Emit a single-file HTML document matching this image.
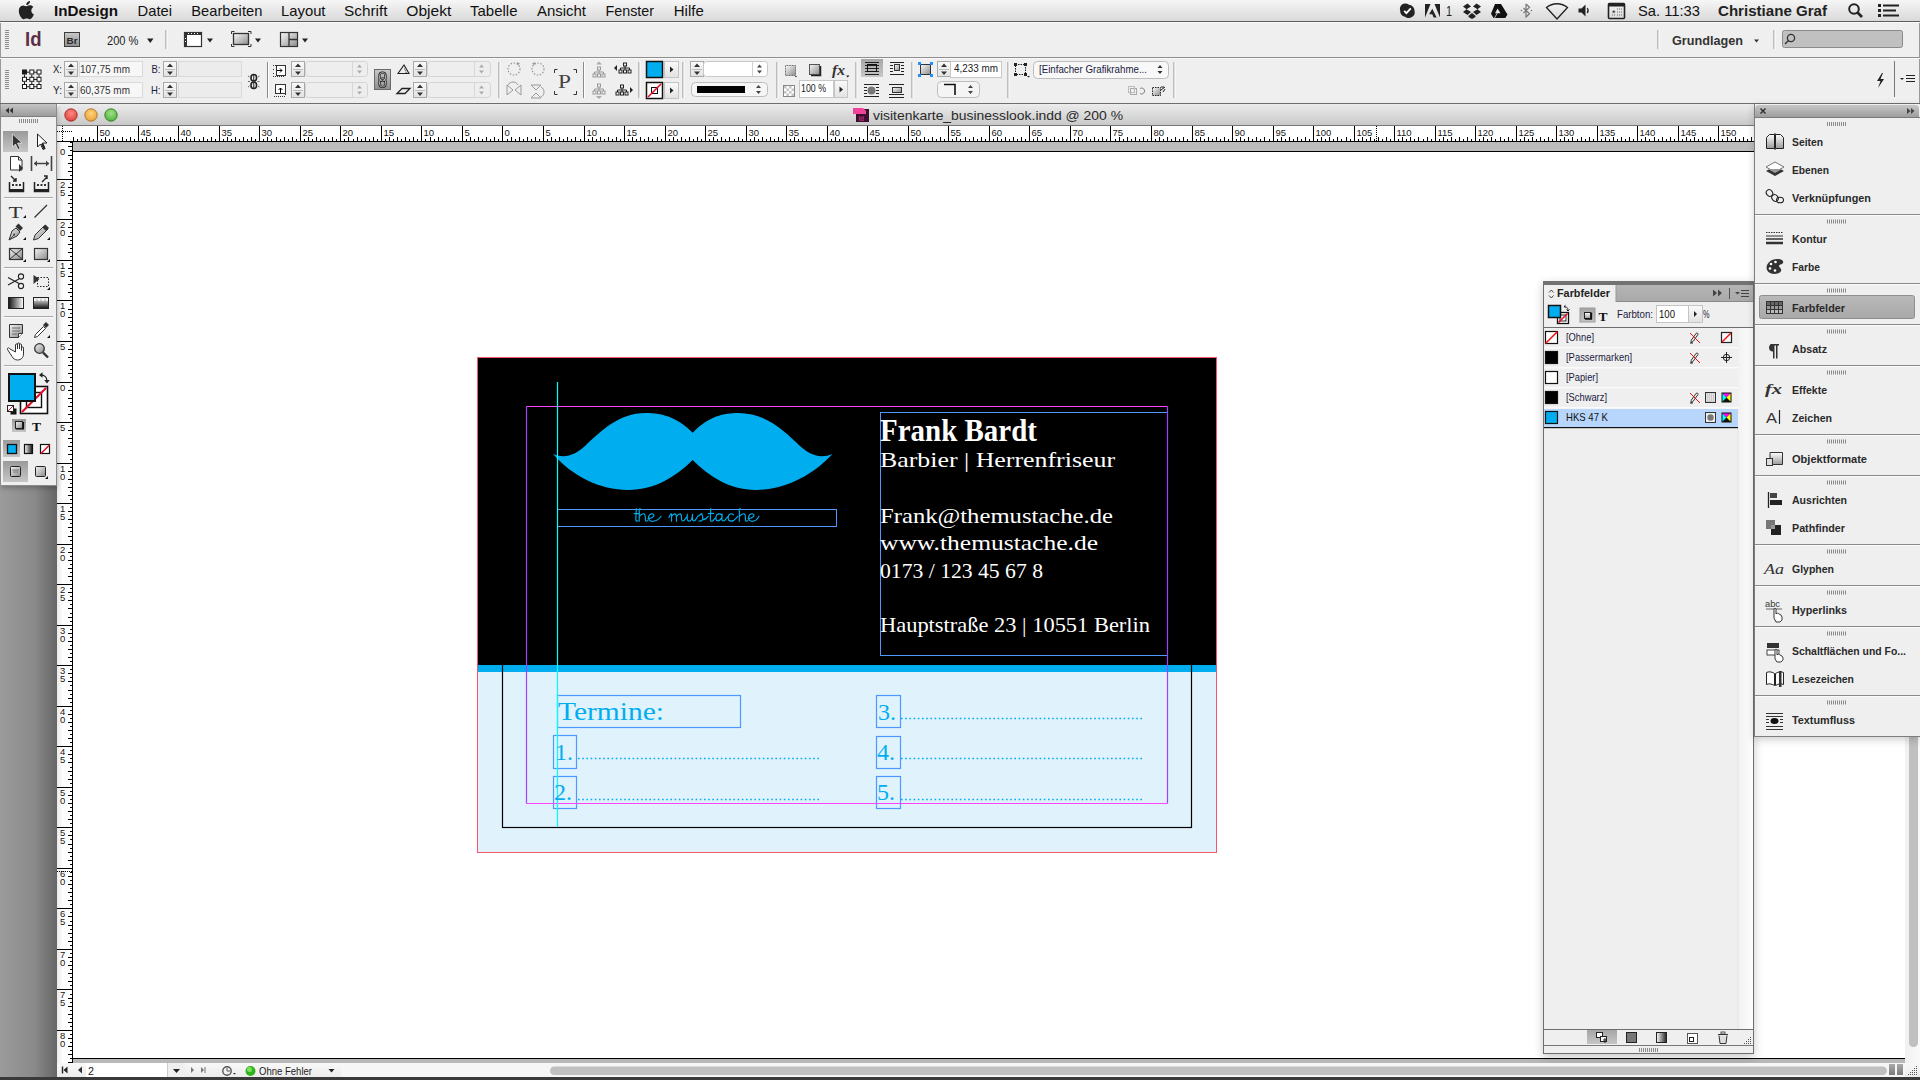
<!DOCTYPE html>
<html><head><meta charset="utf-8">
<style>
*{margin:0;padding:0;box-sizing:border-box}
html,body{width:1920px;height:1080px;overflow:hidden;background:#efefef;font-family:"Liberation Sans",sans-serif;position:relative}
.abs{position:absolute}
#menubar{left:0;top:0;width:1920px;height:22px;background:linear-gradient(#f6f6f6,#d9d9d9);border-bottom:1px solid #5c5c5c}
#menubar span{position:absolute;top:3px;font-size:14.5px;color:#111;white-space:nowrap}
#cp{left:0;top:22px;width:1920px;height:82px;background:#efefef;border-left:1px solid #9a9a9a;border-right:1px solid #9a9a9a}
#leftgrad{left:0;top:104px;width:57px;height:976px;background:linear-gradient(90deg,#9b9b9b,#8a8a8a 60%,#666 100%)}
#tools{left:1px;top:104px;width:56px;height:382px;background:#efefef;border-right:1px solid #8b8b8b;border-bottom:1px solid #8b8b8b;box-shadow:0 2px 5px rgba(0,0,0,.25)}
#docwin{left:57px;top:104px;width:1863px;height:973px;background:#fff}
#titlebar{left:0;top:0;width:1863px;height:22px;background:linear-gradient(#ececec,#c9c9c9);border-top-left-radius:5px;border-bottom:1px solid #777}
#hr{left:15px;top:22px;width:1682px;height:16px;background:#fff;border-bottom:1px solid #000}
#vr{left:0;top:38px;width:16px;height:921px;background:linear-gradient(90deg,#e9e9e9,#fff 40%);border-right:1px solid #000}
#card{left:477px;top:357px;width:740px;height:496px}
#dock{left:1754px;top:104px;width:166px;height:633px;background:#efefef;border-left:1px solid #7d7d7d;border-bottom:1px solid #7d7d7d;box-shadow:0 3px 8px rgba(0,0,0,.18)}
#swp{left:1543px;top:281px;width:211px;height:773px;background:#efefef;border:1px solid #6f6f6f;box-shadow:0 3px 9px rgba(0,0,0,.22)}
.t{position:absolute;white-space:nowrap}
</style></head><body>
<div id="menubar" class="abs"></div>
<div id="cp" class="abs"></div>
<div id="leftgrad" class="abs"></div>
<div id="docwin" class="abs">
  <div id="titlebar" class="abs"></div>
  <div class="abs" style="left:0;top:22px;width:16px;height:16px;background:#fff;border-right:1px solid #000;border-bottom:1px solid #000"><svg class="abs" style="left:0;top:0" width="15" height="16"><path d="M0 5.5H15" stroke="#000" stroke-dasharray="1 1"/><path d="M5.5 0V16" stroke="#000" stroke-dasharray="1 1"/></svg></div>
  <div id="hr" class="abs"><svg class="abs" style="left:0;top:0" width="1682" height="15" viewBox="72 0 1682 15">
<path d="M73.5 11V15 M77.5 13V15 M81.5 11V15 M85.5 13V15 M89.5 11V15 M93.5 13V15 M97.5 0V15 M101.5 13V15 M105.5 11V15 M109.5 13V15 M113.5 11V15 M117.5 13V15 M122.5 11V15 M126.5 13V15 M130.5 11V15 M134.5 13V15 M138.5 0V15 M142.5 13V15 M146.5 11V15 M150.5 13V15 M154.5 11V15 M158.5 13V15 M162.5 11V15 M166.5 13V15 M170.5 11V15 M174.5 13V15 M178.5 0V15 M182.5 13V15 M186.5 11V15 M190.5 13V15 M194.5 11V15 M199.5 13V15 M203.5 11V15 M207.5 13V15 M211.5 11V15 M215.5 13V15 M219.5 0V15 M223.5 13V15 M227.5 11V15 M231.5 13V15 M235.5 11V15 M239.5 13V15 M243.5 11V15 M247.5 13V15 M251.5 11V15 M255.5 13V15 M259.5 0V15 M263.5 13V15 M267.5 11V15 M271.5 13V15 M276.5 11V15 M280.5 13V15 M284.5 11V15 M288.5 13V15 M292.5 11V15 M296.5 13V15 M300.5 0V15 M304.5 13V15 M308.5 11V15 M312.5 13V15 M316.5 11V15 M320.5 13V15 M324.5 11V15 M328.5 13V15 M332.5 11V15 M336.5 13V15 M340.5 0V15 M344.5 13V15 M348.5 11V15 M353.5 13V15 M357.5 11V15 M361.5 13V15 M365.5 11V15 M369.5 13V15 M373.5 11V15 M377.5 13V15 M381.5 0V15 M385.5 13V15 M389.5 11V15 M393.5 13V15 M397.5 11V15 M401.5 13V15 M405.5 11V15 M409.5 13V15 M413.5 11V15 M417.5 13V15 M421.5 0V15 M425.5 13V15 M430.5 11V15 M434.5 13V15 M438.5 11V15 M442.5 13V15 M446.5 11V15 M450.5 13V15 M454.5 11V15 M458.5 13V15 M462.5 0V15 M466.5 13V15 M470.5 11V15 M474.5 13V15 M478.5 11V15 M482.5 13V15 M486.5 11V15 M490.5 13V15 M494.5 11V15 M498.5 13V15 M502.5 0V15 M507.5 13V15 M511.5 11V15 M515.5 13V15 M519.5 11V15 M523.5 13V15 M527.5 11V15 M531.5 13V15 M535.5 11V15 M539.5 13V15 M543.5 0V15 M547.5 13V15 M551.5 11V15 M555.5 13V15 M559.5 11V15 M563.5 13V15 M567.5 11V15 M571.5 13V15 M575.5 11V15 M580.5 13V15 M584.5 0V15 M588.5 13V15 M592.5 11V15 M596.5 13V15 M600.5 11V15 M604.5 13V15 M608.5 11V15 M612.5 13V15 M616.5 11V15 M620.5 13V15 M624.5 0V15 M628.5 13V15 M632.5 11V15 M636.5 13V15 M640.5 11V15 M644.5 13V15 M648.5 11V15 M652.5 13V15 M657.5 11V15 M661.5 13V15 M665.5 0V15 M669.5 13V15 M673.5 11V15 M677.5 13V15 M681.5 11V15 M685.5 13V15 M689.5 11V15 M693.5 13V15 M697.5 11V15 M701.5 13V15 M705.5 0V15 M709.5 13V15 M713.5 11V15 M717.5 13V15 M721.5 11V15 M725.5 13V15 M729.5 11V15 M734.5 13V15 M738.5 11V15 M742.5 13V15 M746.5 0V15 M750.5 13V15 M754.5 11V15 M758.5 13V15 M762.5 11V15 M766.5 13V15 M770.5 11V15 M774.5 13V15 M778.5 11V15 M782.5 13V15 M786.5 0V15 M790.5 13V15 M794.5 11V15 M798.5 13V15 M802.5 11V15 M806.5 13V15 M811.5 11V15 M815.5 13V15 M819.5 11V15 M823.5 13V15 M827.5 0V15 M831.5 13V15 M835.5 11V15 M839.5 13V15 M843.5 11V15 M847.5 13V15 M851.5 11V15 M855.5 13V15 M859.5 11V15 M863.5 13V15 M867.5 0V15 M871.5 13V15 M875.5 11V15 M879.5 13V15 M883.5 11V15 M888.5 13V15 M892.5 11V15 M896.5 13V15 M900.5 11V15 M904.5 13V15 M908.5 0V15 M912.5 13V15 M916.5 11V15 M920.5 13V15 M924.5 11V15 M928.5 13V15 M932.5 11V15 M936.5 13V15 M940.5 11V15 M944.5 13V15 M948.5 0V15 M952.5 13V15 M956.5 11V15 M960.5 13V15 M965.5 11V15 M969.5 13V15 M973.5 11V15 M977.5 13V15 M981.5 11V15 M985.5 13V15 M989.5 0V15 M993.5 13V15 M997.5 11V15 M1001.5 13V15 M1005.5 11V15 M1009.5 13V15 M1013.5 11V15 M1017.5 13V15 M1021.5 11V15 M1025.5 13V15 M1029.5 0V15 M1033.5 13V15 M1037.5 11V15 M1042.5 13V15 M1046.5 11V15 M1050.5 13V15 M1054.5 11V15 M1058.5 13V15 M1062.5 11V15 M1066.5 13V15 M1070.5 0V15 M1074.5 13V15 M1078.5 11V15 M1082.5 13V15 M1086.5 11V15 M1090.5 13V15 M1094.5 11V15 M1098.5 13V15 M1102.5 11V15 M1106.5 13V15 M1110.5 0V15 M1115.5 13V15 M1119.5 11V15 M1123.5 13V15 M1127.5 11V15 M1131.5 13V15 M1135.5 11V15 M1139.5 13V15 M1143.5 11V15 M1147.5 13V15 M1151.5 0V15 M1155.5 13V15 M1159.5 11V15 M1163.5 13V15 M1167.5 11V15 M1171.5 13V15 M1175.5 11V15 M1179.5 13V15 M1183.5 11V15 M1187.5 13V15 M1192.5 0V15 M1196.5 13V15 M1200.5 11V15 M1204.5 13V15 M1208.5 11V15 M1212.5 13V15 M1216.5 11V15 M1220.5 13V15 M1224.5 11V15 M1228.5 13V15 M1232.5 0V15 M1236.5 13V15 M1240.5 11V15 M1244.5 13V15 M1248.5 11V15 M1252.5 13V15 M1256.5 11V15 M1260.5 13V15 M1264.5 11V15 M1269.5 13V15 M1273.5 0V15 M1277.5 13V15 M1281.5 11V15 M1285.5 13V15 M1289.5 11V15 M1293.5 13V15 M1297.5 11V15 M1301.5 13V15 M1305.5 11V15 M1309.5 13V15 M1313.5 0V15 M1317.5 13V15 M1321.5 11V15 M1325.5 13V15 M1329.5 11V15 M1333.5 13V15 M1337.5 11V15 M1341.5 13V15 M1346.5 11V15 M1350.5 13V15 M1354.5 0V15 M1358.5 13V15 M1362.5 11V15 M1366.5 13V15 M1370.5 11V15 M1374.5 13V15 M1378.5 11V15 M1382.5 13V15 M1386.5 11V15 M1390.5 13V15 M1394.5 0V15 M1398.5 13V15 M1402.5 11V15 M1406.5 13V15 M1410.5 11V15 M1414.5 13V15 M1418.5 11V15 M1423.5 13V15 M1427.5 11V15 M1431.5 13V15 M1435.5 0V15 M1439.5 13V15 M1443.5 11V15 M1447.5 13V15 M1451.5 11V15 M1455.5 13V15 M1459.5 11V15 M1463.5 13V15 M1467.5 11V15 M1471.5 13V15 M1475.5 0V15 M1479.5 13V15 M1483.5 11V15 M1487.5 13V15 M1491.5 11V15 M1495.5 13V15 M1500.5 11V15 M1504.5 13V15 M1508.5 11V15 M1512.5 13V15 M1516.5 0V15 M1520.5 13V15 M1524.5 11V15 M1528.5 13V15 M1532.5 11V15 M1536.5 13V15 M1540.5 11V15 M1544.5 13V15 M1548.5 11V15 M1552.5 13V15 M1556.5 0V15 M1560.5 13V15 M1564.5 11V15 M1568.5 13V15 M1572.5 11V15 M1577.5 13V15 M1581.5 11V15 M1585.5 13V15 M1589.5 11V15 M1593.5 13V15 M1597.5 0V15 M1601.5 13V15 M1605.5 11V15 M1609.5 13V15 M1613.5 11V15 M1617.5 13V15 M1621.5 11V15 M1625.5 13V15 M1629.5 11V15 M1633.5 13V15 M1637.5 0V15 M1641.5 13V15 M1645.5 11V15 M1649.5 13V15 M1654.5 11V15 M1658.5 13V15 M1662.5 11V15 M1666.5 13V15 M1670.5 11V15 M1674.5 13V15 M1678.5 0V15 M1682.5 13V15 M1686.5 11V15 M1690.5 13V15 M1694.5 11V15 M1698.5 13V15 M1702.5 11V15 M1706.5 13V15 M1710.5 11V15 M1714.5 13V15 M1718.5 0V15 M1722.5 13V15 M1727.5 11V15 M1731.5 13V15 M1735.5 11V15 M1739.5 13V15 M1743.5 11V15 M1747.5 13V15 M1751.5 11V15" stroke="#000" stroke-width="1" fill="none"/>
<g font-family="Liberation Sans" font-size="9.5" fill="#151515"><text x="99.5" y="9.5">50</text><text x="140.5" y="9.5">45</text><text x="180.5" y="9.5">40</text><text x="221.5" y="9.5">35</text><text x="261.5" y="9.5">30</text><text x="302.5" y="9.5">25</text><text x="342.5" y="9.5">20</text><text x="383.5" y="9.5">15</text><text x="423.5" y="9.5">10</text><text x="464.5" y="9.5">5</text><text x="504.5" y="9.5">0</text><text x="545.5" y="9.5">5</text><text x="586.5" y="9.5">10</text><text x="626.5" y="9.5">15</text><text x="667.5" y="9.5">20</text><text x="707.5" y="9.5">25</text><text x="748.5" y="9.5">30</text><text x="788.5" y="9.5">35</text><text x="829.5" y="9.5">40</text><text x="869.5" y="9.5">45</text><text x="910.5" y="9.5">50</text><text x="950.5" y="9.5">55</text><text x="991.5" y="9.5">60</text><text x="1031.5" y="9.5">65</text><text x="1072.5" y="9.5">70</text><text x="1112.5" y="9.5">75</text><text x="1153.5" y="9.5">80</text><text x="1194.5" y="9.5">85</text><text x="1234.5" y="9.5">90</text><text x="1275.5" y="9.5">95</text><text x="1315.5" y="9.5">100</text><text x="1356.5" y="9.5">105</text><text x="1396.5" y="9.5">110</text><text x="1437.5" y="9.5">115</text><text x="1477.5" y="9.5">120</text><text x="1518.5" y="9.5">125</text><text x="1558.5" y="9.5">130</text><text x="1599.5" y="9.5">135</text><text x="1639.5" y="9.5">140</text><text x="1680.5" y="9.5">145</text><text x="1720.5" y="9.5">150</text></g><path d="M1376.5 0V15" stroke="#000" stroke-dasharray="1 1"/></svg></div>
  <div class="abs" style="left:16px;top:38px;width:1832px;height:10px;background:#bcbcbc;border-bottom:1px solid #000"></div>
  <div id="vr" class="abs"><svg class="abs" style="left:0;top:0" width="17" height="924" viewBox="0 142 17 924">
<path d="M11 122.5H16 M11 130.5H16 M0 138.5H16 M13 142.5H16 M11 146.5H16 M13 150.5H16 M11 155.5H16 M13 159.5H16 M11 163.5H16 M13 167.5H16 M11 171.5H16 M13 175.5H16 M0 179.5H16 M13 183.5H16 M11 187.5H16 M13 191.5H16 M11 195.5H16 M13 199.5H16 M11 203.5H16 M13 207.5H16 M11 211.5H16 M13 215.5H16 M0 219.5H16 M13 223.5H16 M11 227.5H16 M13 232.5H16 M11 236.5H16 M13 240.5H16 M11 244.5H16 M13 248.5H16 M11 252.5H16 M13 256.5H16 M0 260.5H16 M13 264.5H16 M11 268.5H16 M13 272.5H16 M11 276.5H16 M13 280.5H16 M11 284.5H16 M13 288.5H16 M11 292.5H16 M13 296.5H16 M0 300.5H16 M13 304.5H16 M11 309.5H16 M13 313.5H16 M11 317.5H16 M13 321.5H16 M11 325.5H16 M13 329.5H16 M11 333.5H16 M13 337.5H16 M0 341.5H16 M13 345.5H16 M11 349.5H16 M13 353.5H16 M11 357.5H16 M13 361.5H16 M11 365.5H16 M13 369.5H16 M11 373.5H16 M13 377.5H16 M0 382.5H16 M13 386.5H16 M11 390.5H16 M13 394.5H16 M11 398.5H16 M13 402.5H16 M11 406.5H16 M13 410.5H16 M11 414.5H16 M13 418.5H16 M0 422.5H16 M13 426.5H16 M11 430.5H16 M13 434.5H16 M11 438.5H16 M13 442.5H16 M11 446.5H16 M13 450.5H16 M11 454.5H16 M13 459.5H16 M0 463.5H16 M13 467.5H16 M11 471.5H16 M13 475.5H16 M11 479.5H16 M13 483.5H16 M11 487.5H16 M13 491.5H16 M11 495.5H16 M13 499.5H16 M0 503.5H16 M13 507.5H16 M11 511.5H16 M13 515.5H16 M11 519.5H16 M13 523.5H16 M11 527.5H16 M13 531.5H16 M11 536.5H16 M13 540.5H16 M0 544.5H16 M13 548.5H16 M11 552.5H16 M13 556.5H16 M11 560.5H16 M13 564.5H16 M11 568.5H16 M13 572.5H16 M11 576.5H16 M13 580.5H16 M0 584.5H16 M13 588.5H16 M11 592.5H16 M13 596.5H16 M11 600.5H16 M13 604.5H16 M11 608.5H16 M13 613.5H16 M11 617.5H16 M13 621.5H16 M0 625.5H16 M13 629.5H16 M11 633.5H16 M13 637.5H16 M11 641.5H16 M13 645.5H16 M11 649.5H16 M13 653.5H16 M11 657.5H16 M13 661.5H16 M0 665.5H16 M13 669.5H16 M11 673.5H16 M13 677.5H16 M11 681.5H16 M13 685.5H16 M11 690.5H16 M13 694.5H16 M11 698.5H16 M13 702.5H16 M0 706.5H16 M13 710.5H16 M11 714.5H16 M13 718.5H16 M11 722.5H16 M13 726.5H16 M11 730.5H16 M13 734.5H16 M11 738.5H16 M13 742.5H16 M0 746.5H16 M13 750.5H16 M11 754.5H16 M13 758.5H16 M11 762.5H16 M13 767.5H16 M11 771.5H16 M13 775.5H16 M11 779.5H16 M13 783.5H16 M0 787.5H16 M13 791.5H16 M11 795.5H16 M13 799.5H16 M11 803.5H16 M13 807.5H16 M11 811.5H16 M13 815.5H16 M11 819.5H16 M13 823.5H16 M0 827.5H16 M13 831.5H16 M11 835.5H16 M13 839.5H16 M11 844.5H16 M13 848.5H16 M11 852.5H16 M13 856.5H16 M11 860.5H16 M13 864.5H16 M0 868.5H16 M13 872.5H16 M11 876.5H16 M13 880.5H16 M11 884.5H16 M13 888.5H16 M11 892.5H16 M13 896.5H16 M11 900.5H16 M13 904.5H16 M0 908.5H16 M13 912.5H16 M11 916.5H16 M13 921.5H16 M11 925.5H16 M13 929.5H16 M11 933.5H16 M13 937.5H16 M11 941.5H16 M13 945.5H16 M0 949.5H16 M13 953.5H16 M11 957.5H16 M13 961.5H16 M11 965.5H16 M13 969.5H16 M11 973.5H16 M13 977.5H16 M11 981.5H16 M13 985.5H16 M0 989.5H16 M13 994.5H16 M11 998.5H16 M13 1002.5H16 M11 1006.5H16 M13 1010.5H16 M11 1014.5H16 M13 1018.5H16 M11 1022.5H16 M13 1026.5H16 M0 1030.5H16 M13 1034.5H16 M11 1038.5H16 M13 1042.5H16 M11 1046.5H16 M13 1050.5H16 M11 1054.5H16 M13 1058.5H16 M11 1062.5H16" stroke="#000" stroke-width="1" fill="none"/>
<g font-family="Liberation Sans" font-size="9.5" fill="#151515"><text x="3" y="154.5">0</text><text x="3" y="187.5">2</text><text x="3" y="195.5">5</text><text x="3" y="227.5">2</text><text x="3" y="235.5">0</text><text x="3" y="268.5">1</text><text x="3" y="276.5">5</text><text x="3" y="308.5">1</text><text x="3" y="316.5">0</text><text x="3" y="349.5">5</text><text x="3" y="390.5">0</text><text x="3" y="430.5">5</text><text x="3" y="471.5">1</text><text x="3" y="479.5">0</text><text x="3" y="511.5">1</text><text x="3" y="519.5">5</text><text x="3" y="552.5">2</text><text x="3" y="560.5">0</text><text x="3" y="592.5">2</text><text x="3" y="600.5">5</text><text x="3" y="633.5">3</text><text x="3" y="641.5">0</text><text x="3" y="673.5">3</text><text x="3" y="681.5">5</text><text x="3" y="714.5">4</text><text x="3" y="722.5">0</text><text x="3" y="754.5">4</text><text x="3" y="762.5">5</text><text x="3" y="795.5">5</text><text x="3" y="803.5">0</text><text x="3" y="835.5">5</text><text x="3" y="843.5">5</text><text x="3" y="876.5">6</text><text x="3" y="884.5">0</text><text x="3" y="916.5">6</text><text x="3" y="924.5">5</text><text x="3" y="957.5">7</text><text x="3" y="965.5">0</text><text x="3" y="997.5">7</text><text x="3" y="1005.5">5</text><text x="3" y="1038.5">8</text><text x="3" y="1046.5">0</text></g><path d="M0 871.5H16" stroke="#000" stroke-dasharray="1 1"/></svg></div>
  <div class="abs" style="left:15px;top:954px;width:1833px;height:1px;background:#000"></div>
<div class="abs" style="left:16px;top:955px;width:1832px;height:4px;background:#b8b8b8"></div>
<div class="abs" style="left:0;top:959px;width:1863px;height:14px;background:linear-gradient(#f8f8f8,#ececec)"></div>
<div class="abs" style="left:1848px;top:21px;width:15px;height:938px;background:linear-gradient(90deg,#f0f0f0,#fafafa)"></div>
<div class="abs" style="left:1852px;top:496px;width:8.5px;height:447px;border-radius:4.25px;background:#c0c0c0"></div>

</div>
<svg class="abs" style="left:0;top:0" width="1920" height="130" viewBox="0 0 1920 130"><path d="M31.3 10.6c0-2.3 1.9-3.4 2-3.5-1.1-1.6-2.8-1.8-3.4-1.8-1.4-.1-2.8.9-3.5.9-.7 0-1.8-.8-3-.8-1.5 0-3 .9-3.8 2.3-1.6 2.8-.4 7 1.2 9.3.8 1.1 1.7 2.4 2.9 2.3 1.2 0 1.6-.7 3-.7s1.8.7 3 .7c1.3 0 2.1-1.1 2.8-2.3.9-1.3 1.3-2.5 1.3-2.6-.1 0-2.5-.9-2.5-3.8zM29 3.8c.6-.8 1.1-1.8 1-2.9-.9 0-2.1.6-2.7 1.4-.6.7-1.1 1.8-1 2.8 1 .1 2.1-.5 2.7-1.3z" fill="#222"/><text x="54" y="16" font-size="15" font-weight="bold" fill="#111" font-family="Liberation Sans" textLength="64" lengthAdjust="spacingAndGlyphs">InDesign</text><text x="137.5" y="16" font-size="15" fill="#111" font-family="Liberation Sans" textLength="34.5" lengthAdjust="spacingAndGlyphs">Datei</text><text x="191.3" y="16" font-size="15" fill="#111" font-family="Liberation Sans" textLength="71" lengthAdjust="spacingAndGlyphs">Bearbeiten</text><text x="281" y="16" font-size="15" fill="#111" font-family="Liberation Sans" textLength="44.5" lengthAdjust="spacingAndGlyphs">Layout</text><text x="344" y="16" font-size="15" fill="#111" font-family="Liberation Sans" textLength="43.5" lengthAdjust="spacingAndGlyphs">Schrift</text><text x="406.3" y="16" font-size="15" fill="#111" font-family="Liberation Sans" textLength="45" lengthAdjust="spacingAndGlyphs">Objekt</text><text x="470" y="16" font-size="15" fill="#111" font-family="Liberation Sans" textLength="47.5" lengthAdjust="spacingAndGlyphs">Tabelle</text><text x="537" y="16" font-size="15" fill="#111" font-family="Liberation Sans" textLength="49" lengthAdjust="spacingAndGlyphs">Ansicht</text><text x="605.5" y="16" font-size="15" fill="#111" font-family="Liberation Sans" textLength="48.5" lengthAdjust="spacingAndGlyphs">Fenster</text><text x="673.8" y="16" font-size="15" fill="#111" font-family="Liberation Sans" textLength="30" lengthAdjust="spacingAndGlyphs">Hilfe</text><text x="1638" y="16" font-size="15" fill="#111" font-family="Liberation Sans" textLength="62" lengthAdjust="spacingAndGlyphs">Sa. 11:33</text><text x="1718" y="16" font-size="15" font-weight="bold" fill="#222" font-family="Liberation Sans" textLength="109" lengthAdjust="spacingAndGlyphs">Christiane Graf</text><path d="M1402 4.5c2-1.5 5-1.2 7 .2 3 .3 5.5 2.8 5.5 6 .8 2.5-.2 5.3-2.6 6.4-2.1 1.4-5 1.2-6.8-.3-3-.5-5-3-4.9-6-.8-2.4.1-4.9 1.8-6.3z" fill="#222"/><path d="M1404.2 10.8l2.2 2.3 4.4-4.8" stroke="#fff" stroke-width="1.8" fill="none"/><path d="M1425 4h5.5L1425 17.5zM1434.5 4h5.5v13.5zM1432.3 8.8l4.3 8.7h-3l-1.3-3.3h-3.2z" fill="#222"/><text x="1446" y="16" font-size="15" fill="#222" font-family="Liberation Sans" textLength="6" lengthAdjust="spacingAndGlyphs">1</text><g fill="#222"><path d="M1467.5 3.5l-4.5 3 3.5 2.8 4.5-2.9zM1476.5 3.5l4.5 3-3.5 2.8-4.5-2.9zM1463 12l4.5 3 3.5-2.9-4.5-2.8zM1481 12l-4.5 3-3.5-2.9 4.5-2.8zM1472 13l-3.5 2.8v1.2l3.5 2 3.5-2v-1.2z"/></g><path d="M1495 4h6l6.5 10.5-2.2 3.5h-11.8l-2.5-4.3z" fill="#111"/><path d="M1497.6 8.6l-2.6 4.6h5.5z" fill="#e4e4e4"/><path d="M1494.5 18l3-5.2" stroke="#e4e4e4" stroke-width=".8"/><path d="M1526 4v13l3.5-3.2-6-5.8M1526 17l3.5-3.2M1526 4l3.5 3.2-6 5.8" stroke="#777" stroke-width="1.2" fill="none"/><circle cx="1521.5" cy="10.5" r=".8" fill="#777"/><circle cx="1531.5" cy="10.5" r=".8" fill="#777"/><path d="M1546.5 7.5c6-5 15-5 21 0l-10.5 11.5z" fill="none" stroke="#222" stroke-width="1.3"/><path d="M1578.5 8.5h3l4-4v12l-4-4h-3z" fill="#222"/><path d="M1587.2 8c1.2 1.5 1.2 3.5 0 5" stroke="#222" stroke-width="1.2" fill="none"/><rect x="1608.5" y="3.5" width="16" height="15" rx="1" fill="none" stroke="#222" stroke-width="1.6"/><rect x="1608.5" y="3.5" width="16" height="3" fill="#222"/><text x="1612" y="15.5" font-size="9" fill="#222" font-family="Liberation Sans">*</text><path d="M1617 9h6M1617 12h6M1617 15h6M1612 15h3" stroke="#444" stroke-width="0.8" stroke-dasharray="1 1"/><circle cx="1854" cy="9" r="4.8" fill="none" stroke="#222" stroke-width="2"/><path d="M1857.5 12.5l4.5 4.5" stroke="#222" stroke-width="2.6"/><g fill="#222"><rect x="1878" y="4" width="3" height="3"/><rect x="1878" y="9" width="3" height="3"/><rect x="1878" y="14" width="3" height="3"/><rect x="1883" y="4.5" width="16" height="2"/><rect x="1883" y="9.5" width="13" height="2"/><rect x="1883" y="14.5" width="16" height="2"/></g><defs><linearGradient id="gspin" x1="0" y1="0" x2="0" y2="1"><stop offset="0" stop-color="#fafafa"/><stop offset="1" stop-color="#e2e2e2"/></linearGradient><linearGradient id="gbtn" x1="0" y1="0" x2="0" y2="1"><stop offset="0" stop-color="#c9c9c9"/><stop offset="1" stop-color="#8f8f8f"/></linearGradient><linearGradient id="gsel" x1="0" y1="0" x2="0" y2="1"><stop offset="0" stop-color="#a6a6a6"/><stop offset="1" stop-color="#c8c8c8"/></linearGradient><linearGradient id="gicon" x1="0" y1="0" x2="1" y2="1"><stop offset="0" stop-color="#fafafa"/><stop offset="1" stop-color="#8c8c8c"/></linearGradient></defs><rect x="0" y="57" width="1920" height="1" fill="#8e8e8e"/><rect x="0" y="58" width="1920" height="1" fill="#fafafa"/><rect x="0" y="103" width="1920" height="1" fill="#6e6e6e"/><rect x="0" y="22" width="1920" height="1" fill="#fbfbfb"/><rect x="5" y="30" width="4" height="1" fill="#8a8a8a"/><rect x="5" y="32" width="4" height="1" fill="#8a8a8a"/><rect x="5" y="34" width="4" height="1" fill="#8a8a8a"/><rect x="5" y="36" width="4" height="1" fill="#8a8a8a"/><rect x="5" y="38" width="4" height="1" fill="#8a8a8a"/><rect x="5" y="40" width="4" height="1" fill="#8a8a8a"/><rect x="5" y="42" width="4" height="1" fill="#8a8a8a"/><rect x="5" y="44" width="4" height="1" fill="#8a8a8a"/><rect x="5" y="46" width="4" height="1" fill="#8a8a8a"/><rect x="5" y="48" width="4" height="1" fill="#8a8a8a"/><text x="25" y="46" font-size="20" font-weight="bold" fill="#5b2f46" font-family="Liberation Sans" textLength="16.5" lengthAdjust="spacingAndGlyphs">Id</text><rect x="64.5" y="32.5" width="15" height="14" fill="url(#gbtn)" stroke="#3c3c3c"/><text x="66.5" y="44" font-size="9.5" font-weight="bold" fill="#2a2a2a" font-family="Liberation Sans" textLength="11" lengthAdjust="spacingAndGlyphs">Br</text><text x="107" y="45" font-size="12" fill="#222" font-family="Liberation Sans" textLength="31.5" lengthAdjust="spacingAndGlyphs">200 %</text><path d="M147 38.5h6.5l-3.25 4.5z" fill="#222"/><path d="M166.0 30V49" stroke="#8a8a8a" stroke-width="1"/><path d="M167.0 30V49" stroke="#fff" stroke-width="1"/><rect x="184.5" y="32.5" width="17" height="14" fill="#fff" stroke="#333" stroke-width="1.2"/><rect x="184" y="32" width="18" height="3" fill="#333"/><rect x="184" y="32" width="3" height="15" fill="#333"/><path d="M188 33.5h1M191 33.5h1M194 33.5h1M197 33.5h1M185.5 38v1M185.5 41v1" stroke="#fff"/><path d="M207 38.5h6l-3 4z" fill="#222"/><rect x="233.5" y="33.5" width="15" height="11" fill="url(#gicon)" stroke="#333" stroke-width="1.3"/><path d="M231.5 34v-2.5h3M248 31.5h3v2.5M231.5 44v2.5h3M248 46.5h3v-2.5" stroke="#333" fill="none"/><path d="M255 38.5h6l-3 4z" fill="#222"/><rect x="280.5" y="32.5" width="17" height="14" fill="url(#gicon)" stroke="#333" stroke-width="1.2"/><path d="M289 33v13M289 39.5h8" stroke="#333" stroke-width="1.3"/><path d="M302 38.5h6l-3 4z" fill="#222"/><path d="M1658.0 30V49" stroke="#8a8a8a" stroke-width="1"/><path d="M1659.0 30V49" stroke="#fff" stroke-width="1"/><text x="1672" y="45" font-size="12.5" font-weight="bold" fill="#333" font-family="Liberation Sans" textLength="71" lengthAdjust="spacingAndGlyphs">Grundlagen</text><path d="M1754 39.5h5l-2.5 3z" fill="#333"/><path d="M1774.0 30V49" stroke="#8a8a8a" stroke-width="1"/><path d="M1775.0 30V49" stroke="#fff" stroke-width="1"/><rect x="1782.5" y="30.5" width="120" height="17" rx="2" fill="#c0c0c0" stroke="#8a8a8a"/><circle cx="1791" cy="38" r="3.6" fill="none" stroke="#333" stroke-width="1.3"/><path d="M1788.5 40.5l-3.5 3.5" stroke="#333" stroke-width="1.5"/><rect x="5" y="70" width="4" height="1" fill="#8a8a8a"/><rect x="5" y="72" width="4" height="1" fill="#8a8a8a"/><rect x="5" y="74" width="4" height="1" fill="#8a8a8a"/><rect x="5" y="76" width="4" height="1" fill="#8a8a8a"/><rect x="5" y="78" width="4" height="1" fill="#8a8a8a"/><rect x="5" y="80" width="4" height="1" fill="#8a8a8a"/><rect x="5" y="82" width="4" height="1" fill="#8a8a8a"/><rect x="5" y="84" width="4" height="1" fill="#8a8a8a"/><rect x="5" y="86" width="4" height="1" fill="#8a8a8a"/><rect x="5" y="88" width="4" height="1" fill="#8a8a8a"/><g fill="#fff" stroke="#1a1a1a" stroke-width="1"><path d="M26.5 72.2H29.5M34 72.2H37M26.5 79.5H29.5M34 79.5H37M26.5 86.7H29.5M34 86.7H37M24.5 74.5V77.5M24.5 82V84.5M31.8 74.5V77.5M31.8 82V84.5M39 74.5V77.5M39 82V84.5" stroke-width="1"/><rect x="22.5" y="70" width="4" height="4" fill="#1a1a1a"/><rect x="29.8" y="70" width="4" height="4"/><rect x="37" y="70" width="4" height="4"/><rect x="22.5" y="77.3" width="4" height="4"/><rect x="29.8" y="77.3" width="4" height="4"/><rect x="37" y="77.3" width="4" height="4"/><rect x="22.5" y="84.5" width="4" height="4"/><rect x="29.8" y="84.5" width="4" height="4"/><rect x="37" y="84.5" width="4" height="4"/></g><text x="53" y="73" font-size="11.5" fill="#222" font-family="Liberation Sans" textLength="9" lengthAdjust="spacingAndGlyphs">X:</text><text x="53" y="94" font-size="11.5" fill="#222" font-family="Liberation Sans" textLength="9" lengthAdjust="spacingAndGlyphs">Y:</text><rect x="64.5" y="61.5" width="13" height="15" fill="url(#gspin)" stroke="#a9a9a9"/><path d="M66 69.5H76" stroke="#bbb" stroke-width="1"/><path d="M68.0 67.0L71.0 63.5L74.0 67.0z M68.0 71.5L71.0 75.0L74.0 71.5z" fill="#333"/><rect x="79.5" y="61.5" width="63" height="15" fill="#f7f7f7" stroke="#dadada"/><rect x="64.5" y="82.5" width="13" height="15" fill="url(#gspin)" stroke="#a9a9a9"/><path d="M66 90.5H76" stroke="#bbb" stroke-width="1"/><path d="M68.0 88.0L71.0 84.5L74.0 88.0z M68.0 92.5L71.0 96.0L74.0 92.5z" fill="#333"/><rect x="79.5" y="82.5" width="63" height="15" fill="#f7f7f7" stroke="#dadada"/><text x="80" y="73" font-size="11" fill="#333" font-family="Liberation Sans" textLength="50" lengthAdjust="spacingAndGlyphs">107,75 mm</text><text x="80" y="94" font-size="11" fill="#333" font-family="Liberation Sans" textLength="50" lengthAdjust="spacingAndGlyphs">60,375 mm</text><text x="151.5" y="73" font-size="11.5" fill="#1a1a40" font-family="Liberation Sans" textLength="9" lengthAdjust="spacingAndGlyphs">B:</text><text x="151" y="94" font-size="11.5" fill="#1a1a40" font-family="Liberation Sans" textLength="9.5" lengthAdjust="spacingAndGlyphs">H:</text><rect x="163.5" y="61.5" width="13" height="15" fill="url(#gspin)" stroke="#a9a9a9"/><path d="M165 69.5H175" stroke="#bbb" stroke-width="1"/><path d="M167.0 67.0L170.0 63.5L173.0 67.0z M167.0 71.5L170.0 75.0L173.0 71.5z" fill="#333"/><rect x="178.5" y="61.5" width="63" height="15" fill="#ececec" stroke="#dadada"/><rect x="163.5" y="82.5" width="13" height="15" fill="url(#gspin)" stroke="#a9a9a9"/><path d="M165 90.5H175" stroke="#bbb" stroke-width="1"/><path d="M167.0 88.0L170.0 84.5L173.0 88.0z M167.0 92.5L170.0 96.0L173.0 92.5z" fill="#333"/><rect x="178.5" y="82.5" width="63" height="15" fill="#ececec" stroke="#dadada"/><g fill="none" stroke="#222" stroke-width="1.6"><rect x="251" y="74.5" width="5.5" height="6.5" rx="2.75"/><rect x="251" y="82" width="5.5" height="6.5" rx="2.75"/></g><path d="M253.75 75v5.5M253.75 82.5v5.5" stroke="#222" stroke-width="1"/><path d="M248 76l1.5 1M248 81.5h2M248 87l1.5-1M259.5 76l-1.5 1M259.5 81.5h-2M259.5 87l-1.5-1" stroke="#444" stroke-width=".8"/><path d="M267.5 62V98" stroke="#8a8a8a" stroke-width="1"/><path d="M268.5 62V98" stroke="#fff" stroke-width="1"/><rect x="276.5" y="65.5" width="9" height="10" fill="#fff" stroke="#333"/><path d="M273 65.5h3M273 69.5h1M273 73.5h1M273 76.5h12" stroke="#333" stroke-dasharray="1 1"/><path d="M277 70.5h5M280 68.5l2 2-2 2" stroke="#000" fill="none"/><rect x="275.5" y="84.5" width="10" height="9" fill="#fff" stroke="#333"/><path d="M274 96.5h12M285.5 86v10" stroke="#333" stroke-dasharray="1 1"/><path d="M280.5 93V88M278.5 90l2-2 2 2" stroke="#000" fill="none"/><rect x="291.5" y="61.5" width="13" height="15" fill="url(#gspin)" stroke="#a9a9a9"/><path d="M293 69.5H303" stroke="#bbb" stroke-width="1"/><path d="M295.0 67.0L298.0 63.5L301.0 67.0z M295.0 71.5L298.0 75.0L301.0 71.5z" fill="#333"/><rect x="305.5" y="61.5" width="62" height="15" rx="3" fill="#eeeeee" stroke="#d4d4d4"/><path d="M352.5 62V76" stroke="#d8d8d8"/><path d="M357.0 67.5L359.5 64.5L362.0 67.5zM357.0 70.5L359.5 73.5L362.0 70.5z" fill="#aaa"/><rect x="291.5" y="82.5" width="13" height="15" fill="url(#gspin)" stroke="#a9a9a9"/><path d="M293 90.5H303" stroke="#bbb" stroke-width="1"/><path d="M295.0 88.0L298.0 84.5L301.0 88.0z M295.0 92.5L298.0 96.0L301.0 92.5z" fill="#333"/><rect x="305.5" y="82.5" width="62" height="15" rx="3" fill="#eeeeee" stroke="#d4d4d4"/><path d="M352.5 83V97" stroke="#d8d8d8"/><path d="M357.0 88.5L359.5 85.5L362.0 88.5zM357.0 91.5L359.5 94.5L362.0 91.5z" fill="#aaa"/><rect x="374.5" y="69.5" width="16" height="20" fill="url(#gbtn)" stroke="#6a6a6a"/><g fill="none"><rect x="379.5" y="72.5" width="6" height="8.5" rx="3" stroke="#111" stroke-width="2.2"/><rect x="379.5" y="78.5" width="6" height="8.5" rx="3" stroke="#111" stroke-width="2.2"/><rect x="379.5" y="72.5" width="6" height="8.5" rx="3" stroke="#eee" stroke-width=".7"/><rect x="379.5" y="78.5" width="6" height="8.5" rx="3" stroke="#eee" stroke-width=".7"/></g><path d="M398 73.5h11L404 65z" fill="none" stroke="#222" stroke-width="1.1"/><path d="M404.5 68.5l2 5" stroke="#222" stroke-dasharray="1 1"/><path d="M397 93.5h8l5-5h-8z" fill="none" stroke="#222" stroke-width="1.3"/><rect x="413.5" y="61.5" width="13" height="15" fill="url(#gspin)" stroke="#a9a9a9"/><path d="M415 69.5H425" stroke="#bbb" stroke-width="1"/><path d="M417.0 67.0L420.0 63.5L423.0 67.0z M417.0 71.5L420.0 75.0L423.0 71.5z" fill="#333"/><rect x="427.5" y="61.5" width="63" height="15" rx="3" fill="#eeeeee" stroke="#d4d4d4"/><path d="M474.5 62V76" stroke="#d8d8d8"/><path d="M479.0 67.5L481.5 64.5L484.0 67.5zM479.0 70.5L481.5 73.5L484.0 70.5z" fill="#aaa"/><rect x="413.5" y="82.5" width="13" height="15" fill="url(#gspin)" stroke="#a9a9a9"/><path d="M415 90.5H425" stroke="#bbb" stroke-width="1"/><path d="M417.0 88.0L420.0 84.5L423.0 88.0z M417.0 92.5L420.0 96.0L423.0 92.5z" fill="#333"/><rect x="427.5" y="82.5" width="63" height="15" rx="3" fill="#eeeeee" stroke="#d4d4d4"/><path d="M474.5 83V97" stroke="#d8d8d8"/><path d="M479.0 88.5L481.5 85.5L484.0 88.5zM479.0 91.5L481.5 94.5L484.0 91.5z" fill="#aaa"/><path d="M499.0 62V98" stroke="#8a8a8a" stroke-width="1"/><path d="M500.0 62V98" stroke="#fff" stroke-width="1"/><g fill="none" stroke="#999" stroke-width="1.2" stroke-dasharray="1.5 1.5"><circle cx="514" cy="69" r="6"/><circle cx="538" cy="69" r="6"/></g><path d="M517 62l3 1.5-2.5 2z" fill="#999"/><path d="M535 62l-3 1.5 2.5 2z" fill="#999"/><g fill="none" stroke="#999" stroke-width="1"><path d="M507 85v10l6-5zM521 85v10l-6-5z"/><path d="M531 85h10l-5 5zM531 98h10l-5-5z"/></g><path d="M508 85c2-4 8-4 10 0" fill="none" stroke="#999"/><path d="M541 87c4 2 4 8 0 10" fill="none" stroke="#999"/><path d="M554.5 73v-3.5h3M576.5 73v-3.5h-3M554.5 91v3.5h3M576.5 91v3.5h-3" stroke="#333" fill="none" stroke-width="1"/><text x="558" y="88" font-size="19" fill="#444" font-family="Liberation Serif" textLength="13" lengthAdjust="spacingAndGlyphs">P</text><path d="M583.5 62V98" stroke="#8a8a8a" stroke-width="1"/><path d="M584.5 62V98" stroke="#fff" stroke-width="1"/><g fill="none" stroke="#999" stroke-width="1"><rect x="597.5" y="67" width="3" height="3"/><path d="M599 70v2M594.5 72h9M594.5 72v2M599 72v2M603.5 72v2"/><rect x="593" y="74" width="3" height="3"/><rect x="597.5" y="74" width="3" height="3"/><rect x="602" y="74" width="3" height="3"/></g><path d="M596 64.5h6l-3-3z" fill="#aaa"/><g fill="none" stroke="#222" stroke-width="1"><rect x="623.5" y="63" width="3" height="3"/><path d="M625 66v2M620.5 68h9M620.5 68v2M625 68v2M629.5 68v2"/><rect x="619" y="70" width="3" height="3"/><rect x="623.5" y="70" width="3" height="3"/><rect x="628" y="70" width="3" height="3"/></g><path d="M617 65v6l-3-3z" fill="#222"/><g fill="none" stroke="#999" stroke-width="1"><rect x="597.5" y="84" width="3" height="3"/><path d="M599 87v2M594.5 89h9M594.5 89v2M599 89v2M603.5 89v2"/><rect x="593" y="91" width="3" height="3"/><rect x="597.5" y="91" width="3" height="3"/><rect x="602" y="91" width="3" height="3"/></g><path d="M596 96h6l-3 3z" fill="#aaa"/><g fill="none" stroke="#222" stroke-width="1"><rect x="620.5" y="85" width="3" height="3"/><path d="M622 88v2M617.5 90h9M617.5 90v2M622 90v2M626.5 90v2"/><rect x="616" y="92" width="3" height="3"/><rect x="620.5" y="92" width="3" height="3"/><rect x="625" y="92" width="3" height="3"/></g><path d="M630 87v6l3-3z" fill="#222"/><path d="M639.0 62V98" stroke="#8a8a8a" stroke-width="1"/><path d="M640.0 62V98" stroke="#fff" stroke-width="1"/><rect x="646.5" y="61.5" width="16" height="16" fill="#00aeef" stroke="#111" stroke-width="1.5"/><rect x="664.5" y="61.5" width="14" height="16" fill="url(#gspin)" stroke="#c4c4c4"/><path d="M670 66.5l3.5 3-3.5 3z" fill="#222"/><rect x="646.5" y="82.5" width="16" height="16" fill="#fff" stroke="#111" stroke-width="1.5"/><rect x="651.5" y="87.5" width="6" height="6" fill="none" stroke="#111"/><path d="M648 97L661 84" stroke="#e0102a" stroke-width="1.6"/><rect x="664.5" y="82.5" width="14" height="16" fill="url(#gspin)" stroke="#c4c4c4"/><path d="M670 87.5l3.5 3-3.5 3z" fill="#222"/><path d="M683.0 62V98" stroke="#8a8a8a" stroke-width="1"/><path d="M684.0 62V98" stroke="#fff" stroke-width="1"/><rect x="690.5" y="61.5" width="13" height="15" fill="url(#gspin)" stroke="#a9a9a9"/><path d="M692 69.5H702" stroke="#bbb" stroke-width="1"/><path d="M694.0 67.0L697.0 63.5L700.0 67.0z M694.0 71.5L697.0 75.0L700.0 71.5z" fill="#333"/><rect x="703.5" y="61.5" width="64" height="15" rx="3" fill="#fff" stroke="#c8c8c8"/><path d="M752.5 62V76" stroke="#d0d0d0"/><path d="M757.0 67.5L759.5 64.5L762.0 67.5zM757.0 70.5L759.5 73.5L762.0 70.5z" fill="#444"/><rect x="691.5" y="82.5" width="76" height="14" rx="4" fill="#f6f6f6" stroke="#bcbcbc"/><rect x="697" y="86" width="48" height="7" fill="#000"/><path d="M756.0 88.0L758.5 85.0L761.0 88.0zM756.0 91.0L758.5 94.0L761.0 91.0z" fill="#444"/><path d="M777.0 62V98" stroke="#8a8a8a" stroke-width="1"/><path d="M778.0 62V98" stroke="#fff" stroke-width="1"/><rect x="785.5" y="65.5" width="10" height="10" fill="url(#gicon)" stroke="#666" stroke-dasharray="1 .6"/><path d="M795 76l2 0 -1 1.5z" fill="#222"/><rect x="809.5" y="64.5" width="10" height="10" fill="url(#gicon)" stroke="#555"/><path d="M811 75.5h9.5V66" stroke="#222" stroke-width="1.5" fill="none"/><text x="832" y="75" font-size="14" font-weight="bold" fill="#333" font-family="Liberation Serif" textLength="13" lengthAdjust="spacingAndGlyphs" font-style="italic">fx</text><path d="M846 75.5h3.5l-1.75 2z" fill="#222"/><rect x="783.5" y="85.5" width="11" height="11" fill="#fff" stroke="#888"/><path d="M784 86h2.5v2.5h-2.5zM789 86h2.5v2.5h-2.5zM786.5 88.5h2.5v2.5h-2.5zM791.5 88.5h2.5v2.5h-2.5zM784 91h2.5v2.5h-2.5zM789 91h2.5v2.5h-2.5zM786.5 93.5h2.5v2.5h-2.5zM791.5 93.5h2.5v2.5h-2.5z" fill="#c4c4c4"/><rect x="799.5" y="80.5" width="34" height="17" fill="#fff" stroke="#c8c8c8"/><text x="801" y="92" font-size="11" fill="#222" font-family="Liberation Sans" textLength="25" lengthAdjust="spacingAndGlyphs">100 %</text><rect x="834.5" y="80.5" width="13" height="17" fill="url(#gspin)" stroke="#c4c4c4"/><path d="M839.5 86.5l3.5 3-3.5 3z" fill="#222"/><path d="M856.0 62V98" stroke="#8a8a8a" stroke-width="1"/><path d="M857.0 62V98" stroke="#fff" stroke-width="1"/><rect x="861" y="59" width="22" height="18" fill="url(#gsel)"/><g stroke="#222" stroke-width="1.1"><path d="M865 62.5h14M865 65.5h14M865 68.5h14M865 71.5h14M865 74.5h14"/></g><rect x="867.5" y="64.5" width="9" height="7" fill="none" stroke="#111"/><g stroke="#222" stroke-width="1"><path d="M890 62.5h14M890 65.5h3M901 65.5h3M890 68.5h3M901 68.5h3M890 71.5h3M901 71.5h3M890 74.5h14"/></g><rect x="894.5" y="64.5" width="5" height="6" fill="url(#gicon)" stroke="#333"/><g stroke="#222" stroke-width="1"><path d="M864 84.5h15M864 87.5h3M876 87.5h3M864 90.5h3M876 90.5h3M864 93.5h3M876 93.5h3M864 96.5h15"/></g><circle cx="871.5" cy="90.5" r="4" fill="#777"/><g stroke="#222" stroke-width="1.1"><path d="M889 84.5h15M889 94.5h15M889 97.5h15"/></g><rect x="892.5" y="87.5" width="9" height="5" fill="url(#gicon)" stroke="#333"/><path d="M912.0 62V98" stroke="#8a8a8a" stroke-width="1"/><path d="M913.0 62V98" stroke="#fff" stroke-width="1"/><rect x="920.5" y="64.5" width="10" height="10" fill="url(#gicon)" stroke="#333"/><g fill="#1e90ff"><rect x="918" y="62" width="3" height="3"/><rect x="930" y="62" width="3" height="3"/><rect x="918" y="74" width="3" height="3"/><rect x="930" y="74" width="3" height="3"/></g><rect x="937.5" y="61.5" width="13" height="15" fill="url(#gspin)" stroke="#a9a9a9"/><path d="M939 69.5H949" stroke="#bbb" stroke-width="1"/><path d="M941.0 67.0L944.0 63.5L947.0 67.0z M941.0 71.5L944.0 75.0L947.0 71.5z" fill="#333"/><rect x="950.5" y="61.5" width="51" height="16" fill="#fff" stroke="#c8c8c8"/><text x="954" y="72" font-size="11" fill="#222" font-family="Liberation Sans" textLength="44" lengthAdjust="spacingAndGlyphs">4,233 mm</text><rect x="937.5" y="81.5" width="42" height="16" rx="4" fill="#f4f4f4" stroke="#bdbdbd"/><path d="M944 84.5h11v10.5" stroke="#111" stroke-width="1.6" fill="none"/><path d="M968.0 88.0L970.5 85.0L973.0 88.0zM968.0 91.0L970.5 94.0L973.0 91.0z" fill="#444"/><path d="M1008.0 62V98" stroke="#8a8a8a" stroke-width="1"/><path d="M1009.0 62V98" stroke="#fff" stroke-width="1"/><rect x="1015.5" y="64.5" width="10" height="10" fill="none" stroke="#222" stroke-dasharray="1.5 1"/><g fill="#222"><rect x="1014" y="63" width="3" height="3"/><rect x="1024" y="63" width="3" height="3"/><rect x="1014" y="73" width="3" height="3"/><rect x="1024" y="73" width="3" height="3"/></g><path d="M1027 76h3l-1.5 1.5z" fill="#222"/><rect x="1033.5" y="61.5" width="135" height="17" rx="4" fill="#f8f8f8" stroke="#bdbdbd"/><text x="1039" y="73" font-size="11" fill="#1a1a40" font-family="Liberation Sans" textLength="108" lengthAdjust="spacingAndGlyphs">[Einfacher Grafikrahme...</text><path d="M1157.5 68.0L1160 65.0L1162.5 68.0zM1157.5 71.0L1160 74.0L1162.5 71.0z" fill="#333"/><rect x="1130.5" y="88.5" width="6" height="6" fill="#eee" stroke="#aaa"/><rect x="1128.5" y="86.5" width="6" height="6" fill="none" stroke="#bbb"/><path d="M1140 88.5a3 3 0 1 1 0 5" stroke="#888" fill="none"/><rect x="1152.5" y="87.5" width="8" height="8" fill="url(#gicon)" stroke="#222" stroke-dasharray="1.5 1"/><path d="M1161 90l4-3M1161 87h3M1163 92l2-3" stroke="#222"/><path d="M1174.0 62V98" stroke="#8a8a8a" stroke-width="1"/><path d="M1175.0 62V98" stroke="#fff" stroke-width="1"/><path d="M1882 73l-5 8h3.5l-2.5 7 6-9h-3.5l2.5-6z" fill="#222"/><rect x="1894" y="61" width="1" height="36" fill="#7a7a7a"/><path d="M1900 78h4l-2 2z" fill="#222"/><path d="M1906 75.5h9M1906 78.5h9M1906 81.5h9" stroke="#222" stroke-width="1.1"/><circle cx="71" cy="115" r="6.2" fill="url(#tl71)" stroke="#9a1a16" stroke-width="0.8"/><defs><radialGradient id="tl71" cx="50%" cy="35%" r="65%"><stop offset="0" stop-color="#ff8a86"/><stop offset="1" stop-color="#e0443e"/></radialGradient></defs><circle cx="91" cy="115" r="6.2" fill="url(#tl91)" stroke="#a0661a" stroke-width="0.8"/><defs><radialGradient id="tl91" cx="50%" cy="35%" r="65%"><stop offset="0" stop-color="#ffd27a"/><stop offset="1" stop-color="#e8a33a"/></radialGradient></defs><circle cx="111" cy="115" r="6.2" fill="url(#tl111)" stroke="#2a6e1a" stroke-width="0.8"/><defs><radialGradient id="tl111" cx="50%" cy="35%" r="65%"><stop offset="0" stop-color="#9fe28a"/><stop offset="1" stop-color="#4fb43a"/></radialGradient></defs><rect x="856" y="109" width="13" height="13" fill="#3a0e2c"/><path d="M853 108h10l3 3v3h-13z" fill="#f0449a"/><text x="858.5" y="121" font-size="6.5" fill="#e0449a" font-family="Liberation Sans">Id</text><text x="873" y="120" font-size="13.5" fill="#2a2a2a" font-family="Liberation Sans" textLength="250" lengthAdjust="spacingAndGlyphs">visitenkarte_businesslook.indd @ 200 %</text></svg>
<div id="tools" class="abs"></div>
<svg class="abs" style="left:0;top:100px" width="60" height="390" viewBox="0 100 60 390"><defs><linearGradient id="ghead" x1="0" y1="0" x2="0" y2="1"><stop offset="0" stop-color="#c4c4c4"/><stop offset="1" stop-color="#9c9c9c"/></linearGradient><linearGradient id="gtsel" x1="0" y1="0" x2="0" y2="1"><stop offset="0" stop-color="#9a9a9a"/><stop offset="1" stop-color="#c6c6c6"/></linearGradient><linearGradient id="gblk" x1="0" y1="0" x2="1" y2="0"><stop offset="0" stop-color="#111"/><stop offset="1" stop-color="#fff"/></linearGradient><linearGradient id="gblk2" x1="0" y1="0" x2="0" y2="1"><stop offset="0" stop-color="#fff"/><stop offset="1" stop-color="#111"/></linearGradient><linearGradient id="gtb" x1="0" y1="0" x2="1" y2="1"><stop offset="0" stop-color="#f4f4f4"/><stop offset="1" stop-color="#8a8a8a"/></linearGradient></defs><rect x="1" y="104" width="55" height="12" fill="url(#ghead)"/><rect x="1" y="116" width="55" height="1" fill="#7f7f7f"/><path d="M9 107.5v6l-3.5-3zM13 107.5v6l-3.5-3z" fill="#333"/><rect x="19" y="119" width="1" height="4" fill="#8a8a8a"/><rect x="21" y="119" width="1" height="4" fill="#8a8a8a"/><rect x="23" y="119" width="1" height="4" fill="#8a8a8a"/><rect x="25" y="119" width="1" height="4" fill="#8a8a8a"/><rect x="27" y="119" width="1" height="4" fill="#8a8a8a"/><rect x="29" y="119" width="1" height="4" fill="#8a8a8a"/><rect x="31" y="119" width="1" height="4" fill="#8a8a8a"/><rect x="33" y="119" width="1" height="4" fill="#8a8a8a"/><rect x="35" y="119" width="1" height="4" fill="#8a8a8a"/><rect x="37" y="119" width="1" height="4" fill="#8a8a8a"/><rect x="3" y="131" width="25" height="21" fill="url(#gtsel)"/><path d="M12.5 134v13l3-3 2.5 5.5 2-1-2.5-5.5h4.5z" fill="#333" stroke="#fff" stroke-width=".6"/><path d="M37.5 134v13l3-3 2.5 5.5 2-1-2.5-5.5h4.5z" fill="#fff" stroke="#222" stroke-width="1"/><path d="M41 144l2.5 5.5 2-1-2.5-5.5z" fill="#222"/><path d="M10.5 156.5h8l3.5 3.5v10h-11.5z" fill="#fff" stroke="#333"/><path d="M18.5 156.5v3.5h3.5" fill="none" stroke="#333"/><path d="M19 164v8l4-4z" fill="#333"/><path d="M31.5 156v15M51.5 156v15" stroke="#444" stroke-width="1.6"/><path d="M34 163.5h15" stroke="#444" stroke-width="1.5"/><path d="M34 163.5l3-3v6zM49 163.5l-3-3v6z" fill="#444"/><path d="M9.5 182v9.5h14V182" fill="none" stroke="#222" stroke-width="1.5"/><rect x="10" y="189" width="13" height="3" fill="#222"/><g fill="#333"><rect x="12" y="184" width="2" height="2"/><rect x="15.5" y="184" width="2" height="2"/><rect x="19" y="184" width="2" height="2"/></g><path d="M11 176l5 5M16 178v3h-3" stroke="#222" stroke-width="1.4" fill="none"/><path d="M34.5 182v9.5h14V182" fill="none" stroke="#222" stroke-width="1.5"/><rect x="35" y="189" width="13" height="3" fill="#222"/><g fill="#333"><rect x="37" y="184" width="2" height="2"/><rect x="40.5" y="184" width="2" height="2"/><rect x="44" y="184" width="2" height="2"/></g><path d="M42 182l5-5M44 176h3v3" stroke="#222" stroke-width="1.4" fill="none"/><rect x="4" y="197" width="49" height="1" fill="#a9a9a9"/><rect x="4" y="198" width="49" height="1" fill="#fafafa"/><rect x="4" y="267" width="49" height="1" fill="#a9a9a9"/><rect x="4" y="268" width="49" height="1" fill="#fafafa"/><rect x="4" y="316" width="49" height="1" fill="#a9a9a9"/><rect x="4" y="317" width="49" height="1" fill="#fafafa"/><rect x="4" y="365" width="49" height="1" fill="#a9a9a9"/><rect x="4" y="366" width="49" height="1" fill="#fafafa"/><text x="8.5" y="218" font-size="17" fill="#333" font-family="Liberation Serif" textLength="14" lengthAdjust="spacingAndGlyphs">T</text><path d="M26 218v-3l-3 3z" fill="#111"/><path d="M34.5 217.5l12.5-12.5" stroke="#333" stroke-width="1.2"/><path d="M9 240l3-9 4-3 4 4-3 4z" fill="url(#gtb)" stroke="#333" stroke-width="1"/><path d="M15.5 226.5l3-3 4.5 4.5-3 3z" fill="#333"/><path d="M9.5 239.5l4.5-4.5" stroke="#333" stroke-width=".8"/><circle cx="14.2" cy="234.5" r=".9" fill="#333"/><path d="M26 240v-3l-3 3z" fill="#111"/><path d="M33.5 240l1.5-5 9.5-9.5 3.5 3.5-9.5 9.5z" fill="url(#gtb)" stroke="#333" stroke-width="1"/><path d="M42.5 227.5l3-3 3.5 3.5-3 3z" fill="#333"/><path d="M50 240v-3l-3 3z" fill="#111"/><rect x="9.5" y="248.5" width="13" height="11" fill="url(#gtb)" stroke="#333" stroke-width="1.2"/><path d="M10 249l12 10M22 249l-12 10" stroke="#333" stroke-width="1"/><path d="M26 262v-3l-3 3z" fill="#111"/><rect x="34.5" y="248.5" width="13" height="11" fill="url(#gtb)" stroke="#333" stroke-width="1.2"/><path d="M50 262v-3l-3 3z" fill="#111"/><circle cx="21" cy="276.5" r="2.6" fill="none" stroke="#222" stroke-width="1.1"/><circle cx="21" cy="286" r="2.6" fill="none" stroke="#222" stroke-width="1.1"/><path d="M8 277.5l11 6M8 285l11-6" stroke="#222" stroke-width="1.2"/><path d="M33.5 275v9l6-5z" fill="#333"/><rect x="37.5" y="277.5" width="11" height="9" fill="none" stroke="#222" stroke-dasharray="1.5 1.5"/><path d="M50 290v-3l-3 3z" fill="#111"/><rect x="8.5" y="297.5" width="15" height="11" fill="url(#gblk)" stroke="#222" stroke-width="1"/><rect x="33.5" y="297.5" width="15" height="11" fill="url(#gblk2)" stroke="#222" stroke-width="1"/><path d="M34 300h14" stroke="#fff" stroke-dasharray="2 2" stroke-width="1.5"/><path d="M9.5 324.5h13v9l-4 4h-9z" fill="url(#gtb)" stroke="#333"/><path d="M12 328h8M12 331h8M12 334h5" stroke="#555" stroke-width=".8"/><path d="M18.5 337.5v-4h4" fill="#fff" stroke="#333"/><path d="M34.5 337.5l1-3 8-8 2 2-8 8z" fill="#fff" stroke="#333"/><path d="M43 325l3-3 3 3-3 3z" fill="#333"/><path d="M50 338v-3l-3 3z" fill="#111"/><path d="M10 349c-1.5-2-3-1-2.5 .5l4.5 7c1 2 3 3.5 5.5 3.5 3.5 0 6-2.5 6-6v-6c0-1.5-2-1.5-2 0v2.5V345c0-1.5-2-1.5-2 0v4V344c0-1.5-2-1.5-2 0v5V345c0-1.5-2-1.5-2 0v7z" fill="#fff" stroke="#333" stroke-width="1"/><circle cx="39.5" cy="348.5" r="4.8" fill="url(#gtb)" stroke="#333" stroke-width="1.3"/><path d="M43 352.5l5 5" stroke="#333" stroke-width="2.4"/><rect x="20.5" y="386.5" width="27" height="27" fill="#fff" stroke="#111" stroke-width="1.6"/><rect x="26.5" y="392.5" width="15" height="15" fill="none" stroke="#111" stroke-width="1.4"/><path d="M22 412L46 388" stroke="#e0102a" stroke-width="2.2"/><rect x="8" y="373" width="28" height="29" fill="#111"/><rect x="10" y="375" width="24" height="25" fill="#00aeef"/><path d="M41 375c3.5 0 6 2.5 6 6" stroke="#222" stroke-width="1.3" fill="none"/><path d="M39 375l3.5-2.8v5.6zM47 383.5l-2.8-3.5h5.6z" fill="#222"/><rect x="10.5" y="408.5" width="6" height="6" fill="#111"/><rect x="7.5" y="405.5" width="6" height="6" fill="#fff" stroke="#222"/><path d="M8 411l5-5" stroke="#e0102a" stroke-width="1"/><rect x="12" y="419" width="14" height="13" fill="url(#gtsel)"/><rect x="15.5" y="421.5" width="7" height="7" fill="url(#gtb)" stroke="#222"/><path d="M16 429h7.5v-7" stroke="#111" stroke-width="1.2" fill="none"/><text x="32" y="431" font-size="12" font-weight="bold" fill="#111" font-family="Liberation Serif" textLength="9" lengthAdjust="spacingAndGlyphs">T</text><rect x="3" y="440" width="17" height="17" fill="url(#gtsel)"/><rect x="7.5" y="444.5" width="9" height="9" fill="#00aeef" stroke="#111" stroke-width="1.3"/><defs><linearGradient id="gwb" x1="0" x2="1"><stop offset="0" stop-color="#fff"/><stop offset="1" stop-color="#111"/></linearGradient></defs><rect x="24.5" y="444.5" width="8" height="9" fill="url(#gwb)" stroke="#111" stroke-width="1.2"/><rect x="40.5" y="444.5" width="9" height="9" fill="#fff" stroke="#111" stroke-width="1.2"/><path d="M41 453.5l8.5-8.5" stroke="#e0102a" stroke-width="1.6"/><rect x="3" y="461" width="25" height="21" fill="url(#gtsel)"/><rect x="10.5" y="466.5" width="10" height="10" rx="1" fill="url(#gtb)" stroke="#222"/><path d="M12 470h7M13 472h5" stroke="#555" stroke-width=".7"/><rect x="35.5" y="466.5" width="10" height="10" rx="1" fill="url(#gtb)" stroke="#222"/><path d="M48 479v-3l-3 3z" fill="#111"/></svg>
<div id="card" class="abs"><svg class="abs" style="left:0;top:0" width="740" height="496" viewBox="477 357 740 496">
<rect x="477.5" y="357.5" width="739" height="495" fill="#e0f2fc" stroke="#f5566e" stroke-width="1"/>
<rect x="478" y="358" width="738" height="307" fill="#000"/>
<rect x="478" y="665" width="738" height="7" fill="#00aeef"/>
<rect x="502.5" y="381.5" width="689" height="446" fill="none" stroke="#000" stroke-width="1.2"/>
<path d="M692.7 432.8 C676 416 660 413 646 413 C618 413 600 432 585 446 C575 455 565 459 553 454 C572 476 600 490 628 490 C656 490 676 476 692.7 460 C709 476 729 490 756 490 C784 490 812 476 832.5 454 C820 459 810 455 800 446 C785 432 767 413 738 413 C724 413 709 416 692.7 432.8 Z" fill="#00aeef"/>
<rect x="557.5" y="509.5" width="279" height="17" fill="none" stroke="#4d99ff" stroke-width="1"/>
<rect x="880.5" y="412.5" width="287" height="243" fill="none" stroke="#4d99ff" stroke-width="1"/>
<rect x="557.5" y="695.5" width="183" height="32" fill="none" stroke="#4d99ff" stroke-width="1.2"/>
<rect x="553.5" y="735.5" width="23" height="33" fill="none" stroke="#4d99ff" stroke-width="1.2"/>
<rect x="553.5" y="776.5" width="23" height="32" fill="none" stroke="#4d99ff" stroke-width="1.2"/>
<rect x="876.5" y="695.5" width="24" height="32" fill="none" stroke="#4d99ff" stroke-width="1.2"/>
<rect x="876.5" y="736.5" width="24" height="32" fill="none" stroke="#4d99ff" stroke-width="1.2"/>
<rect x="876.5" y="776.5" width="24" height="32" fill="none" stroke="#4d99ff" stroke-width="1.2"/>
<g stroke="#00aeef" stroke-width="1.6" stroke-dasharray="1.6 2.6" fill="none">
<path d="M578 758.5H820"/><path d="M578 799.5H820"/>
<path d="M901 718.5H1143"/><path d="M901 758.5H1143"/><path d="M901 799.5H1143"/>
</g>
<path d="M526.5 406.5V803.5M1167.5 406.5V803.5" stroke="#a040ff" stroke-width="1.2"/>
<path d="M526.5 406.5H1167.5M526.5 803.5H1167.5" stroke="#ff44ff" stroke-width="1.2"/>
<path d="M557.5 382V827" stroke="#00ffff" stroke-width="1.2"/>
<g font-family="Liberation Serif" fill="#fff">
<text x="880" y="441" font-size="32" font-weight="bold" textLength="157" lengthAdjust="spacingAndGlyphs">Frank Bardt</text>
<text x="880" y="467" font-size="22" textLength="235" lengthAdjust="spacingAndGlyphs">Barbier | Herrenfriseur</text>
<text x="880" y="522.5" font-size="22" textLength="233" lengthAdjust="spacingAndGlyphs">Frank@themustache.de</text>
<text x="880" y="550" font-size="22" textLength="218" lengthAdjust="spacingAndGlyphs">www.themustache.de</text>
<text x="880" y="577.5" font-size="22" textLength="163" lengthAdjust="spacingAndGlyphs">0173 / 123 45 67 8</text>
<text x="880" y="632" font-size="22" textLength="270" lengthAdjust="spacingAndGlyphs">Hauptstraße 23 | 10551 Berlin</text>
</g>
<g font-family="Liberation Serif" fill="#00aeef">
<text x="558" y="720" font-size="25" textLength="106" lengthAdjust="spacingAndGlyphs">Termine:</text>
<text x="555" y="760" font-size="24">1.</text>
<text x="554" y="800" font-size="24">2.</text>
<text x="878" y="720" font-size="24">3.</text>
<text x="877" y="760" font-size="24">4.</text>
<text x="877" y="800" font-size="24">5.</text>

</g>
<path fill="none" stroke="#00aeef" stroke-width="1.15" stroke-linecap="round" stroke-linejoin="round" d="M636.3 508.5 L635.8 520 Q636 521.8 637.8 520.8 M634.3 513.6 L639 513.4
M640.2 508.5 Q638.5 509.5 639.3 512 L639.2 521.3 M639.4 516.5 Q641.5 513.3 644 513.8 Q645.5 514.5 645.3 518 L645.4 520.5 Q646.3 521.8 647.8 520.6
M647.8 518.8 Q652 518.5 653.8 516.2 Q654.5 513.6 651.5 513.8 Q648.5 514.6 648.5 518 Q649 521.6 653 521.3 Q658 521 661 516.3
M669 517.5 Q670.5 513.5 671.6 514 L671.5 521.3 M671.6 516.5 Q673.5 513.5 675.5 514 Q676.6 515 676.5 521.3 M676.6 516.5 Q678.6 513.5 680.6 514 Q681.6 515 681.6 519.5 Q682 521.6 684 520.6 L687.3 516
M687.3 514.3 L687.2 519 Q687.6 521.6 690 521 Q692.2 520 692.5 514.3 L692.5 519.5 Q693 521.6 695 520.6 L697.6 516.5
M697.6 516.5 Q700 514.8 701.6 513.5 Q703.2 517 702.6 519.5 Q701.6 521.6 698.8 521 M702.6 519.5 Q705 520.2 708.2 516.3
M710.8 508.5 L710.3 520 Q710.6 521.8 712.6 521 L715.2 518.2 M708.3 513.6 L713.6 513.4
M722.2 515 Q719.2 512.8 716.8 514.8 Q715 518 716.6 520.6 Q719 521.8 721.6 518.2 L722.2 514 L721.9 520 Q722.6 521.6 724.6 520.6 L727.8 516.5
M733.4 514.8 Q731.2 512.9 729.2 514.4 Q727.5 517 728.6 520 Q730.6 521.9 733.6 520.6 L737.8 516.3
M740.3 508.5 Q738.6 509.5 739.4 512 L739.3 521.3 M739.5 516.5 Q741.8 513.3 744.2 513.8 Q745.6 514.5 745.4 518 L745.5 520.5 Q746.4 521.8 748 520.6
M748 518.8 Q752 518.5 753.8 516.2 Q754.5 513.6 751.5 513.8 Q748.5 514.6 748.5 518 Q749 521.6 752.8 521.3 Q756.6 521 759 516.3"/>
</svg>
</div>
<div id="swp" class="abs"></div>
<svg class="abs" style="left:1540px;top:278px" width="216" height="780" viewBox="1540 278 216 780"><defs><linearGradient id="gtab" x1="0" y1="0" x2="0" y2="1"><stop offset="0" stop-color="#b5b5b5"/><stop offset="1" stop-color="#a8a8a8"/></linearGradient><linearGradient id="gscr" x1="0" y1="0" x2="1" y2="0"><stop offset="0" stop-color="#f2f2f2"/><stop offset="1" stop-color="#fdfdfd"/></linearGradient><linearGradient id="gftsel" x1="0" y1="0" x2="0" y2="1"><stop offset="0" stop-color="#a5a5a5"/><stop offset="1" stop-color="#c5c5c5"/></linearGradient></defs><rect x="1543" y="281" width="211" height="4" fill="#727272"/><rect x="1616" y="285" width="137" height="17" fill="url(#gtab)"/><rect x="1616" y="301" width="137" height="1" fill="#8a8a8a"/><rect x="1615.5" y="285" width="1" height="17" fill="#9a9a9a"/><path d="M1549 292.5l2.3-2.5 2.3 2.5M1549 295.5l2.3 2.5 2.3-2.5" stroke="#444" fill="none" stroke-width="1"/><text x="1557" y="297" font-size="11.5" font-weight="bold" fill="#222" font-family="Liberation Sans" textLength="53" lengthAdjust="spacingAndGlyphs">Farbfelder</text><path d="M1713 289.5v7l4-3.5zM1718 289.5v7l4-3.5z" fill="#444"/><rect x="1729" y="288" width="1" height="11" fill="#555"/><path d="M1735 292h5l-2.5 2.5z" fill="#444"/><path d="M1741 290.5h8M1741 293.5h8M1741 296.5h8" stroke="#444"/><rect x="1557.5" y="312.5" width="11" height="11" fill="#fff" stroke="#111" stroke-width="1.3"/><rect x="1560" y="315" width="6" height="6" fill="none" stroke="#111" stroke-width=".9"/><path d="M1558.5 322.5l9-9" stroke="#e0102a" stroke-width="1.6"/><rect x="1548.5" y="305.5" width="12" height="12" fill="#00aeef" stroke="#111" stroke-width="1.5"/><path d="M1564 306.5c2 0 4 1 4 3.5M1568 311l-1.5-1.5M1568 311l1.5-1.5M1564 306.5l1.5-1.2M1564 306.5l1.5 1.2" stroke="#222" stroke-width="1" fill="none"/><rect x="1580" y="308" width="15" height="14" fill="url(#gftsel)" stroke="#9a9a9a"/><rect x="1584.5" y="312.5" width="6" height="6" fill="url(#gico)" stroke="#222"/><path d="M1585 319h6.5v-6.5" stroke="#111" stroke-width="1.3" fill="none"/><text x="1598.5" y="321" font-size="13" font-weight="bold" fill="#111" font-family="Liberation Serif" textLength="9" lengthAdjust="spacingAndGlyphs">T</text><text x="1617" y="318" font-size="10.5" fill="#1a1a40" font-family="Liberation Sans" textLength="36" lengthAdjust="spacingAndGlyphs">Farbton:</text><rect x="1656.5" y="305.5" width="32" height="17" fill="#fff" stroke="#c4c4c4"/><text x="1659" y="317.5" font-size="10.5" fill="#111" font-family="Liberation Sans" textLength="16" lengthAdjust="spacingAndGlyphs">100</text><rect x="1688.5" y="305.5" width="14" height="17" fill="url(#gspin)" stroke="#c4c4c4"/><path d="M1694 311l3 3-3 3z" fill="#222"/><text x="1703" y="318" font-size="10" fill="#1a1a40" font-family="Liberation Sans" textLength="6.5" lengthAdjust="spacingAndGlyphs">%</text><rect x="1544" y="327" width="209" height="1" fill="#6e6e6e"/><rect x="1738" y="328" width="15" height="701" fill="url(#gscr)"/><rect x="1737.5" y="428" width="1" height="601" fill="#e4e4e4"/><rect x="1544" y="347" width="194" height="1.5" fill="#fbfbfb"/><rect x="1545.5" y="331.5" width="12" height="12" fill="#fff" stroke="#111" stroke-width="1.2"/><path d="M1545.5 343.5L1557.5 331.5" stroke="#ee1111" stroke-width="1.6"/><text x="1566" y="341" font-size="10.5" fill="#1a1a40" font-family="Liberation Sans" textLength="28" lengthAdjust="spacingAndGlyphs">[Ohne]</text><path d="M1691 342.5l2-1 5-7c.5-1-1-2-1.8-1.2l-5 7z" fill="none" stroke="#222" stroke-width=".9"/><path d="M1690 333l10 10" stroke="#ee1111" stroke-width="1"/><path d="M1690 343h3" stroke="#222"/><rect x="1721.5" y="332.5" width="10" height="10" fill="#f8f8f8" stroke="#222" stroke-width="1.2"/><path d="M1722 342l9-9" stroke="#ee1111" stroke-width="1.5"/><rect x="1544" y="367" width="194" height="1.5" fill="#fbfbfb"/><rect x="1545.5" y="351.5" width="12" height="12" fill="#000" stroke="#111" stroke-width="1.2"/><text x="1566" y="361" font-size="10.5" fill="#1a1a40" font-family="Liberation Sans" textLength="66" lengthAdjust="spacingAndGlyphs">[Passermarken]</text><path d="M1691 362.5l2-1 5-7c.5-1-1-2-1.8-1.2l-5 7z" fill="none" stroke="#222" stroke-width=".9"/><path d="M1690 353l10 10" stroke="#ee1111" stroke-width="1"/><path d="M1690 363h3" stroke="#222"/><circle cx="1726.5" cy="357.5" r="3.2" fill="none" stroke="#222" stroke-width="1"/><path d="M1726.5 352v11M1721 357.5h11" stroke="#222" stroke-width="1"/><rect x="1544" y="387" width="194" height="1.5" fill="#fbfbfb"/><rect x="1545.5" y="371.5" width="12" height="12" fill="#fff" stroke="#111" stroke-width="1.2"/><text x="1566" y="381" font-size="10.5" fill="#1a1a40" font-family="Liberation Sans" textLength="32" lengthAdjust="spacingAndGlyphs">[Papier]</text><rect x="1544" y="407" width="194" height="1.5" fill="#fbfbfb"/><rect x="1545.5" y="391.5" width="12" height="12" fill="#000" stroke="#111" stroke-width="1.2"/><text x="1566" y="401" font-size="10.5" fill="#1a1a40" font-family="Liberation Sans" textLength="41" lengthAdjust="spacingAndGlyphs">[Schwarz]</text><path d="M1691 402.5l2-1 5-7c.5-1-1-2-1.8-1.2l-5 7z" fill="none" stroke="#222" stroke-width=".9"/><path d="M1690 393l10 10" stroke="#ee1111" stroke-width="1"/><path d="M1690 403h3" stroke="#222"/><rect x="1721.5" y="392.5" width="10" height="10" fill="#111"/><path d="M1722.5 393.5h8l-4 4z" fill="#ff00ff"/><path d="M1722.5 393.5v8l4-4z" fill="#00ffff"/><path d="M1730.5 393.5v8l-4-4z" fill="#ffff00"/><rect x="1705.5" y="392.5" width="10" height="10" fill="#ccc" stroke="#333"/><path d="M1706 394h9M1706 396h9M1706 398h9M1706 400h9" stroke="#fff" stroke-dasharray="1 1" stroke-width=".9"/><rect x="1544" y="409" width="194" height="19" fill="#b8d6fb"/><rect x="1544" y="427" width="194" height="1.2" fill="#111"/><rect x="1545.5" y="411.5" width="12" height="12" fill="#00aeef" stroke="#111" stroke-width="1.2"/><text x="1566" y="421" font-size="10.5" fill="#111" font-family="Liberation Sans" textLength="42" lengthAdjust="spacingAndGlyphs">HKS 47 K</text><rect x="1721.5" y="412.5" width="10" height="10" fill="#111"/><path d="M1722.5 413.5h8l-4 4z" fill="#ff00ff"/><path d="M1722.5 413.5v8l4-4z" fill="#00ffff"/><path d="M1730.5 413.5v8l-4-4z" fill="#ffff00"/><rect x="1705.5" y="412.5" width="10" height="10" fill="#eee" stroke="#333"/><circle cx="1710.5" cy="417.5" r="3.2" fill="#777"/><rect x="1544" y="1029" width="209" height="1" fill="#6e6e6e"/><rect x="1544" y="1030" width="209" height="15" fill="#efefef"/><rect x="1544" y="1045" width="209" height="1" fill="#777"/><rect x="1544" y="1046" width="209" height="7" fill="#efefef"/><rect x="1639" y="1048" width="1" height="4" fill="#8a8a8a"/><rect x="1641" y="1048" width="1" height="4" fill="#8a8a8a"/><rect x="1643" y="1048" width="1" height="4" fill="#8a8a8a"/><rect x="1645" y="1048" width="1" height="4" fill="#8a8a8a"/><rect x="1647" y="1048" width="1" height="4" fill="#8a8a8a"/><rect x="1649" y="1048" width="1" height="4" fill="#8a8a8a"/><rect x="1651" y="1048" width="1" height="4" fill="#8a8a8a"/><rect x="1653" y="1048" width="1" height="4" fill="#8a8a8a"/><rect x="1655" y="1048" width="1" height="4" fill="#8a8a8a"/><rect x="1657" y="1048" width="1" height="4" fill="#8a8a8a"/><rect x="1587" y="1030" width="30" height="14" fill="url(#gftsel)"/><rect x="1596.5" y="1032.5" width="6" height="5" fill="#fff" stroke="#222"/><rect x="1600.5" y="1036.5" width="6" height="5" fill="#fff" stroke="#222"/><path d="M1605 1038v5M1603 1040h4" stroke="#222"/><rect x="1626.5" y="1032.5" width="10" height="10" fill="#777" stroke="#222"/><defs><linearGradient id="gsg" x1="0" x2="1"><stop offset="0" stop-color="#fff"/><stop offset="1" stop-color="#222"/></linearGradient></defs><rect x="1656.5" y="1032.5" width="10" height="10" fill="url(#gsg)" stroke="#222"/><rect x="1687.5" y="1033.5" width="10" height="10" fill="#fff" stroke="#555"/><rect x="1689.5" y="1037.5" width="4" height="4" fill="none" stroke="#222"/><path d="M1718 1034.5h10M1719 1035.5l1 8h6l1-8" stroke="#333" fill="#ddd"/><rect x="1721" y="1032" width="4" height="2" fill="none" stroke="#333" stroke-width=".8"/><rect x="1750" y="1037" width="1" height="1" fill="#555"/><rect x="1750" y="1039" width="1" height="1" fill="#555"/><rect x="1748" y="1039" width="1" height="1" fill="#555"/><rect x="1750" y="1041" width="1" height="1" fill="#555"/><rect x="1748" y="1041" width="1" height="1" fill="#555"/><rect x="1746" y="1041" width="1" height="1" fill="#555"/><rect x="1750" y="1043" width="1" height="1" fill="#555"/><rect x="1748" y="1043" width="1" height="1" fill="#555"/><rect x="1746" y="1043" width="1" height="1" fill="#555"/><rect x="1744" y="1043" width="1" height="1" fill="#555"/></svg>
<div id="dock" class="abs"></div>
<svg class="abs" style="left:1750px;top:100px" width="170" height="640" viewBox="1750 100 170 640"><defs><linearGradient id="gdh" x1="0" y1="0" x2="0" y2="1"><stop offset="0" stop-color="#c6c6c6"/><stop offset="1" stop-color="#9e9e9e"/></linearGradient><linearGradient id="gdsel" x1="0" y1="0" x2="0" y2="1"><stop offset="0" stop-color="#b9b9b9"/><stop offset="1" stop-color="#a9a9a9"/></linearGradient><linearGradient id="gico" x1="0" y1="0" x2="0" y2="1"><stop offset="0" stop-color="#fff"/><stop offset="1" stop-color="#9a9a9a"/></linearGradient></defs><path d="M1755 117V109a4 4 0 0 1 4-4H1915a4 4 0 0 1 4 4V117z" fill="url(#gdh)"/><rect x="1755" y="117" width="165" height="1" fill="#7a7a7a"/><path d="M1760.5 108.5l5 5M1765.5 108.5l-5 5" stroke="#333" stroke-width="1.5"/><path d="M1907 108v6l3.5-3zM1911 108v6l3.5-3z" fill="#444"/><rect x="1755" y="214.0" width="165" height="1" fill="#8a8a8a"/><rect x="1755" y="215.0" width="165" height="1" fill="#fbfbfb"/><rect x="1755" y="283.0" width="165" height="1" fill="#8a8a8a"/><rect x="1755" y="284.0" width="165" height="1" fill="#fbfbfb"/><rect x="1755" y="324.0" width="165" height="1" fill="#8a8a8a"/><rect x="1755" y="325.0" width="165" height="1" fill="#fbfbfb"/><rect x="1755" y="365.0" width="165" height="1" fill="#8a8a8a"/><rect x="1755" y="366.0" width="165" height="1" fill="#fbfbfb"/><rect x="1755" y="434.0" width="165" height="1" fill="#8a8a8a"/><rect x="1755" y="435.0" width="165" height="1" fill="#fbfbfb"/><rect x="1755" y="475.0" width="165" height="1" fill="#8a8a8a"/><rect x="1755" y="476.0" width="165" height="1" fill="#fbfbfb"/><rect x="1755" y="544.0" width="165" height="1" fill="#8a8a8a"/><rect x="1755" y="545.0" width="165" height="1" fill="#fbfbfb"/><rect x="1755" y="585.0" width="165" height="1" fill="#8a8a8a"/><rect x="1755" y="586.0" width="165" height="1" fill="#fbfbfb"/><rect x="1755" y="626.0" width="165" height="1" fill="#8a8a8a"/><rect x="1755" y="627.0" width="165" height="1" fill="#fbfbfb"/><rect x="1755" y="695.0" width="165" height="1" fill="#8a8a8a"/><rect x="1755" y="696.0" width="165" height="1" fill="#fbfbfb"/><rect x="1827" y="122" width="1" height="4" fill="#8a8a8a"/><rect x="1829" y="122" width="1" height="4" fill="#8a8a8a"/><rect x="1831" y="122" width="1" height="4" fill="#8a8a8a"/><rect x="1833" y="122" width="1" height="4" fill="#8a8a8a"/><rect x="1835" y="122" width="1" height="4" fill="#8a8a8a"/><rect x="1837" y="122" width="1" height="4" fill="#8a8a8a"/><rect x="1839" y="122" width="1" height="4" fill="#8a8a8a"/><rect x="1841" y="122" width="1" height="4" fill="#8a8a8a"/><rect x="1843" y="122" width="1" height="4" fill="#8a8a8a"/><rect x="1845" y="122" width="1" height="4" fill="#8a8a8a"/><rect x="1827" y="219.5" width="1" height="4" fill="#8a8a8a"/><rect x="1829" y="219.5" width="1" height="4" fill="#8a8a8a"/><rect x="1831" y="219.5" width="1" height="4" fill="#8a8a8a"/><rect x="1833" y="219.5" width="1" height="4" fill="#8a8a8a"/><rect x="1835" y="219.5" width="1" height="4" fill="#8a8a8a"/><rect x="1837" y="219.5" width="1" height="4" fill="#8a8a8a"/><rect x="1839" y="219.5" width="1" height="4" fill="#8a8a8a"/><rect x="1841" y="219.5" width="1" height="4" fill="#8a8a8a"/><rect x="1843" y="219.5" width="1" height="4" fill="#8a8a8a"/><rect x="1845" y="219.5" width="1" height="4" fill="#8a8a8a"/><rect x="1827" y="288.5" width="1" height="4" fill="#8a8a8a"/><rect x="1829" y="288.5" width="1" height="4" fill="#8a8a8a"/><rect x="1831" y="288.5" width="1" height="4" fill="#8a8a8a"/><rect x="1833" y="288.5" width="1" height="4" fill="#8a8a8a"/><rect x="1835" y="288.5" width="1" height="4" fill="#8a8a8a"/><rect x="1837" y="288.5" width="1" height="4" fill="#8a8a8a"/><rect x="1839" y="288.5" width="1" height="4" fill="#8a8a8a"/><rect x="1841" y="288.5" width="1" height="4" fill="#8a8a8a"/><rect x="1843" y="288.5" width="1" height="4" fill="#8a8a8a"/><rect x="1845" y="288.5" width="1" height="4" fill="#8a8a8a"/><rect x="1827" y="329.5" width="1" height="4" fill="#8a8a8a"/><rect x="1829" y="329.5" width="1" height="4" fill="#8a8a8a"/><rect x="1831" y="329.5" width="1" height="4" fill="#8a8a8a"/><rect x="1833" y="329.5" width="1" height="4" fill="#8a8a8a"/><rect x="1835" y="329.5" width="1" height="4" fill="#8a8a8a"/><rect x="1837" y="329.5" width="1" height="4" fill="#8a8a8a"/><rect x="1839" y="329.5" width="1" height="4" fill="#8a8a8a"/><rect x="1841" y="329.5" width="1" height="4" fill="#8a8a8a"/><rect x="1843" y="329.5" width="1" height="4" fill="#8a8a8a"/><rect x="1845" y="329.5" width="1" height="4" fill="#8a8a8a"/><rect x="1827" y="370.5" width="1" height="4" fill="#8a8a8a"/><rect x="1829" y="370.5" width="1" height="4" fill="#8a8a8a"/><rect x="1831" y="370.5" width="1" height="4" fill="#8a8a8a"/><rect x="1833" y="370.5" width="1" height="4" fill="#8a8a8a"/><rect x="1835" y="370.5" width="1" height="4" fill="#8a8a8a"/><rect x="1837" y="370.5" width="1" height="4" fill="#8a8a8a"/><rect x="1839" y="370.5" width="1" height="4" fill="#8a8a8a"/><rect x="1841" y="370.5" width="1" height="4" fill="#8a8a8a"/><rect x="1843" y="370.5" width="1" height="4" fill="#8a8a8a"/><rect x="1845" y="370.5" width="1" height="4" fill="#8a8a8a"/><rect x="1827" y="439.5" width="1" height="4" fill="#8a8a8a"/><rect x="1829" y="439.5" width="1" height="4" fill="#8a8a8a"/><rect x="1831" y="439.5" width="1" height="4" fill="#8a8a8a"/><rect x="1833" y="439.5" width="1" height="4" fill="#8a8a8a"/><rect x="1835" y="439.5" width="1" height="4" fill="#8a8a8a"/><rect x="1837" y="439.5" width="1" height="4" fill="#8a8a8a"/><rect x="1839" y="439.5" width="1" height="4" fill="#8a8a8a"/><rect x="1841" y="439.5" width="1" height="4" fill="#8a8a8a"/><rect x="1843" y="439.5" width="1" height="4" fill="#8a8a8a"/><rect x="1845" y="439.5" width="1" height="4" fill="#8a8a8a"/><rect x="1827" y="480.5" width="1" height="4" fill="#8a8a8a"/><rect x="1829" y="480.5" width="1" height="4" fill="#8a8a8a"/><rect x="1831" y="480.5" width="1" height="4" fill="#8a8a8a"/><rect x="1833" y="480.5" width="1" height="4" fill="#8a8a8a"/><rect x="1835" y="480.5" width="1" height="4" fill="#8a8a8a"/><rect x="1837" y="480.5" width="1" height="4" fill="#8a8a8a"/><rect x="1839" y="480.5" width="1" height="4" fill="#8a8a8a"/><rect x="1841" y="480.5" width="1" height="4" fill="#8a8a8a"/><rect x="1843" y="480.5" width="1" height="4" fill="#8a8a8a"/><rect x="1845" y="480.5" width="1" height="4" fill="#8a8a8a"/><rect x="1827" y="549.5" width="1" height="4" fill="#8a8a8a"/><rect x="1829" y="549.5" width="1" height="4" fill="#8a8a8a"/><rect x="1831" y="549.5" width="1" height="4" fill="#8a8a8a"/><rect x="1833" y="549.5" width="1" height="4" fill="#8a8a8a"/><rect x="1835" y="549.5" width="1" height="4" fill="#8a8a8a"/><rect x="1837" y="549.5" width="1" height="4" fill="#8a8a8a"/><rect x="1839" y="549.5" width="1" height="4" fill="#8a8a8a"/><rect x="1841" y="549.5" width="1" height="4" fill="#8a8a8a"/><rect x="1843" y="549.5" width="1" height="4" fill="#8a8a8a"/><rect x="1845" y="549.5" width="1" height="4" fill="#8a8a8a"/><rect x="1827" y="590.5" width="1" height="4" fill="#8a8a8a"/><rect x="1829" y="590.5" width="1" height="4" fill="#8a8a8a"/><rect x="1831" y="590.5" width="1" height="4" fill="#8a8a8a"/><rect x="1833" y="590.5" width="1" height="4" fill="#8a8a8a"/><rect x="1835" y="590.5" width="1" height="4" fill="#8a8a8a"/><rect x="1837" y="590.5" width="1" height="4" fill="#8a8a8a"/><rect x="1839" y="590.5" width="1" height="4" fill="#8a8a8a"/><rect x="1841" y="590.5" width="1" height="4" fill="#8a8a8a"/><rect x="1843" y="590.5" width="1" height="4" fill="#8a8a8a"/><rect x="1845" y="590.5" width="1" height="4" fill="#8a8a8a"/><rect x="1827" y="631.5" width="1" height="4" fill="#8a8a8a"/><rect x="1829" y="631.5" width="1" height="4" fill="#8a8a8a"/><rect x="1831" y="631.5" width="1" height="4" fill="#8a8a8a"/><rect x="1833" y="631.5" width="1" height="4" fill="#8a8a8a"/><rect x="1835" y="631.5" width="1" height="4" fill="#8a8a8a"/><rect x="1837" y="631.5" width="1" height="4" fill="#8a8a8a"/><rect x="1839" y="631.5" width="1" height="4" fill="#8a8a8a"/><rect x="1841" y="631.5" width="1" height="4" fill="#8a8a8a"/><rect x="1843" y="631.5" width="1" height="4" fill="#8a8a8a"/><rect x="1845" y="631.5" width="1" height="4" fill="#8a8a8a"/><rect x="1827" y="700.5" width="1" height="4" fill="#8a8a8a"/><rect x="1829" y="700.5" width="1" height="4" fill="#8a8a8a"/><rect x="1831" y="700.5" width="1" height="4" fill="#8a8a8a"/><rect x="1833" y="700.5" width="1" height="4" fill="#8a8a8a"/><rect x="1835" y="700.5" width="1" height="4" fill="#8a8a8a"/><rect x="1837" y="700.5" width="1" height="4" fill="#8a8a8a"/><rect x="1839" y="700.5" width="1" height="4" fill="#8a8a8a"/><rect x="1841" y="700.5" width="1" height="4" fill="#8a8a8a"/><rect x="1843" y="700.5" width="1" height="4" fill="#8a8a8a"/><rect x="1845" y="700.5" width="1" height="4" fill="#8a8a8a"/><rect x="1759.5" y="295.5" width="155" height="23" rx="2" fill="url(#gdsel)" stroke="#8f8f8f"/><text x="1792" y="146" font-size="11.5" font-weight="bold" fill="#2a2a2a" font-family="Liberation Sans" textLength="31" lengthAdjust="spacingAndGlyphs">Seiten</text><text x="1792" y="174" font-size="11.5" font-weight="bold" fill="#2a2a2a" font-family="Liberation Sans" textLength="37" lengthAdjust="spacingAndGlyphs">Ebenen</text><text x="1792" y="202" font-size="11.5" font-weight="bold" fill="#2a2a2a" font-family="Liberation Sans" textLength="79" lengthAdjust="spacingAndGlyphs">Verknüpfungen</text><text x="1792" y="243" font-size="11.5" font-weight="bold" fill="#2a2a2a" font-family="Liberation Sans" textLength="35" lengthAdjust="spacingAndGlyphs">Kontur</text><text x="1792" y="271" font-size="11.5" font-weight="bold" fill="#2a2a2a" font-family="Liberation Sans" textLength="28" lengthAdjust="spacingAndGlyphs">Farbe</text><text x="1792" y="312" font-size="11.5" font-weight="bold" fill="#2a2a2a" font-family="Liberation Sans" textLength="53" lengthAdjust="spacingAndGlyphs">Farbfelder</text><text x="1792" y="353" font-size="11.5" font-weight="bold" fill="#2a2a2a" font-family="Liberation Sans" textLength="35" lengthAdjust="spacingAndGlyphs">Absatz</text><text x="1792" y="394" font-size="11.5" font-weight="bold" fill="#2a2a2a" font-family="Liberation Sans" textLength="35" lengthAdjust="spacingAndGlyphs">Effekte</text><text x="1792" y="422" font-size="11.5" font-weight="bold" fill="#2a2a2a" font-family="Liberation Sans" textLength="40" lengthAdjust="spacingAndGlyphs">Zeichen</text><text x="1792" y="463" font-size="11.5" font-weight="bold" fill="#2a2a2a" font-family="Liberation Sans" textLength="75" lengthAdjust="spacingAndGlyphs">Objektformate</text><text x="1792" y="504" font-size="11.5" font-weight="bold" fill="#2a2a2a" font-family="Liberation Sans" textLength="55" lengthAdjust="spacingAndGlyphs">Ausrichten</text><text x="1792" y="532" font-size="11.5" font-weight="bold" fill="#2a2a2a" font-family="Liberation Sans" textLength="53" lengthAdjust="spacingAndGlyphs">Pathfinder</text><text x="1792" y="573" font-size="11.5" font-weight="bold" fill="#2a2a2a" font-family="Liberation Sans" textLength="42" lengthAdjust="spacingAndGlyphs">Glyphen</text><text x="1792" y="614" font-size="11.5" font-weight="bold" fill="#2a2a2a" font-family="Liberation Sans" textLength="55" lengthAdjust="spacingAndGlyphs">Hyperlinks</text><text x="1792" y="655" font-size="11.5" font-weight="bold" fill="#2a2a2a" font-family="Liberation Sans" textLength="114" lengthAdjust="spacingAndGlyphs">Schaltflächen und Fo...</text><text x="1792" y="683" font-size="11.5" font-weight="bold" fill="#2a2a2a" font-family="Liberation Sans" textLength="62" lengthAdjust="spacingAndGlyphs">Lesezeichen</text><text x="1792" y="724" font-size="11.5" font-weight="bold" fill="#2a2a2a" font-family="Liberation Sans" textLength="63" lengthAdjust="spacingAndGlyphs">Textumfluss</text><path d="M1766.5 137.5l3-3h5v14h-8z" fill="url(#gico)" stroke="#222"/><path d="M1783.5 137.5l-3-3h-5v14h8z" fill="url(#gico)" stroke="#222"/><path d="M1775 133v17" stroke="#222"/><path d="M1766 171l9-5 9 5-9 5z" fill="#333"/><path d="M1766 167l9-5 9 5-9 5z" fill="#fff" stroke="#555" stroke-width=".8"/><path d="M1768 169l7 4 7-4" fill="#999"/><g fill="none" stroke="#222" stroke-width="1.1"><ellipse cx="1769.5" cy="193" rx="3" ry="3.5" transform="rotate(-40 1769.5 193)"/><ellipse cx="1775" cy="198" rx="3" ry="3.5" transform="rotate(-40 1775 198)"/><ellipse cx="1780" cy="200" rx="3.5" ry="2.8"/></g><path d="M1766 232.5h17" stroke="#333" stroke-dasharray="1.5 1"/><path d="M1766 236h17" stroke="#333" stroke-width="1"/><path d="M1766 239h17" stroke="#333" stroke-width="1.5"/><path d="M1766 243h17" stroke="#333" stroke-width="2.5"/><path d="M1767 270c-2-5 3-11 10-11 5 0 7 2 6 4-1 2-4 1-4 3 0 2 3 2 2 5-2 4-12 4-14-1z" fill="#333"/><circle cx="1771" cy="264" r="1.3" fill="#fff"/><circle cx="1775.5" cy="262" r="1.3" fill="#fff"/><circle cx="1770" cy="268.5" r="1.3" fill="#fff"/><circle cx="1775" cy="270.5" r="1.3" fill="#fff"/><rect x="1766" y="301" width="17" height="13" fill="#333"/><rect x="1767" y="302" width="3" height="3" fill="#666"/><rect x="1767" y="306" width="3" height="3" fill="#999"/><rect x="1767" y="310" width="3" height="3" fill="#bbb"/><rect x="1771" y="302" width="3" height="3" fill="#666"/><rect x="1771" y="306" width="3" height="3" fill="#999"/><rect x="1771" y="310" width="3" height="3" fill="#bbb"/><rect x="1775" y="302" width="3" height="3" fill="#666"/><rect x="1775" y="306" width="3" height="3" fill="#999"/><rect x="1775" y="310" width="3" height="3" fill="#bbb"/><rect x="1779" y="302" width="3" height="3" fill="#666"/><rect x="1779" y="306" width="3" height="3" fill="#999"/><rect x="1779" y="310" width="3" height="3" fill="#bbb"/><path d="M1771 344h8v1.5h-1.5v13h-1.5v-13h-1.5v13h-1.5v-7c-2.5 0-4-1.5-4-3.8s1.5-3.7 2-3.7z" fill="#333"/><text x="1765" y="394" font-size="15" font-weight="bold" fill="#333" font-family="Liberation Serif" textLength="17" lengthAdjust="spacingAndGlyphs" font-style="italic">fx</text><text x="1766" y="423" font-size="15" fill="#333" font-family="Liberation Sans" textLength="11" lengthAdjust="spacingAndGlyphs">A</text><path d="M1779.5 410v14" stroke="#222" stroke-width="1.2"/><path d="M1770 452.5h12.5v12h-12.5z" fill="url(#gico)" stroke="#333"/><rect x="1766.5" y="458.5" width="6" height="7" fill="#ddd" stroke="#333"/><path d="M1768.5 492v16" stroke="#222" stroke-width="1.3"/><rect x="1770" y="493" width="7" height="5" fill="#444"/><rect x="1770" y="500" width="12" height="5" fill="#222"/><rect x="1766" y="520" width="9" height="9" fill="#777"/><rect x="1771" y="525" width="10" height="10" fill="#222"/><rect x="1771" y="525" width="4" height="4" fill="#999"/><text x="1764" y="574" font-size="14" fill="#333" font-family="Liberation Serif" textLength="20" lengthAdjust="spacingAndGlyphs" font-style="italic">Aa</text><text x="1765" y="607" font-size="9" fill="#333" font-family="Liberation Sans" textLength="15" lengthAdjust="spacingAndGlyphs">abc</text><path d="M1766 609h16" stroke="#444" stroke-width=".8"/><path d="M1774 618v-9c0-1 2-1 2 0v5l1-1c1 0 2 1 2 1l2 1 1 2v3l-2 2h-4z" fill="#fff" stroke="#222" stroke-width=".9"/><rect x="1767" y="643" width="12" height="5" fill="#333"/><rect x="1767" y="650" width="12" height="5" fill="#fff" stroke="#333" stroke-width=".9"/><path d="M1775 659v-9c0-1 2-1 2 0v5l1-1c1 0 2 1 2 1l2 1 1 2v2l-2 2h-4z" fill="#fff" stroke="#222" stroke-width=".9"/><path d="M1766.5 672.5c2-1 5-1 8 1v12c-3-2-6-2-8-1zM1783.5 672.5c-2-1-5-1-8 1v12c3-2 6-2 8-1z" fill="#fff" stroke="#222"/><rect x="1779" y="671" width="2.5" height="16" fill="#333"/><path d="M1766 713.5h17M1766 716.5h17M1766 726.5h17M1766 729.5h17M1766 719.5h3M1780 719.5h3M1766 722.5h3M1780 722.5h3" stroke="#333"/><ellipse cx="1774.5" cy="721" rx="4" ry="3" fill="#111"/></svg>
<svg class="abs" style="left:0;top:1050px" width="1920" height="30" viewBox="0 1050 1920 30"><path d="M62.5 1066.5v7" stroke="#222" stroke-width="1.4"/><path d="M67.5 1066.5v7l-4-3.5z" fill="#222"/><path d="M82 1066.5v7l-4-3.5z" fill="#333"/><rect x="86" y="1063" width="84" height="14" fill="#fff"/><text x="88" y="1074.5" font-size="10.5" fill="#222" font-family="Liberation Sans" textLength="6" lengthAdjust="spacingAndGlyphs">2</text><rect x="167.5" y="1063" width="1" height="14" fill="#999"/><rect x="168" y="1063" width="17" height="14" fill="#efefef"/><path d="M173 1069h7l-3.5 4z" fill="#222"/><path d="M191 1067v6l3-3z" fill="#777"/><path d="M201 1067v6l3-3z" fill="#777"/><path d="M205 1067v6" stroke="#777"/><circle cx="227" cy="1071" r="4.2" fill="none" stroke="#555" stroke-width="1.4"/><path d="M227 1068v3h3" stroke="#555" fill="none"/><path d="M233 1073h3l-1.5 1.5z" fill="#222"/><circle cx="250.5" cy="1071" r="5" fill="#2fb31e"/><circle cx="249.5" cy="1069.5" r="2.5" fill="#7ee05e"/><text x="259" y="1074.5" font-size="10.5" fill="#222" font-family="Liberation Sans" textLength="53" lengthAdjust="spacingAndGlyphs">Ohne Fehler</text><path d="M328.5 1069h6l-3 3.5z" fill="#222"/><rect x="341" y="1063" width="1564" height="14" fill="#f6f6f6"/><rect x="550" y="1066.5" width="1337" height="8.5" rx="4.25" fill="#c0c0c0"/><rect x="1889" y="1064" width="6" height="11" fill="url(#gsplit)"/><rect x="1897" y="1064" width="6" height="11" fill="url(#gsplit)"/><defs><linearGradient id="gsplit" x1="0" y1="0" x2="0" y2="1"><stop offset="0" stop-color="#aaa"/><stop offset="1" stop-color="#7a7a7a"/></linearGradient></defs><rect x="1916" y="1066" width="1" height="1" fill="#555"/><rect x="1916" y="1068" width="1" height="1" fill="#555"/><rect x="1914" y="1068" width="1" height="1" fill="#555"/><rect x="1916" y="1070" width="1" height="1" fill="#555"/><rect x="1914" y="1070" width="1" height="1" fill="#555"/><rect x="1912" y="1070" width="1" height="1" fill="#555"/><rect x="1916" y="1072" width="1" height="1" fill="#555"/><rect x="1914" y="1072" width="1" height="1" fill="#555"/><rect x="1912" y="1072" width="1" height="1" fill="#555"/><rect x="1910" y="1072" width="1" height="1" fill="#555"/><rect x="1916" y="1074" width="1" height="1" fill="#555"/><rect x="1914" y="1074" width="1" height="1" fill="#555"/><rect x="1912" y="1074" width="1" height="1" fill="#555"/><rect x="1910" y="1074" width="1" height="1" fill="#555"/><rect x="1908" y="1074" width="1" height="1" fill="#555"/><rect x="0" y="1077" width="1920" height="3" fill="#3a3a3a"/></svg>
</body></html>
